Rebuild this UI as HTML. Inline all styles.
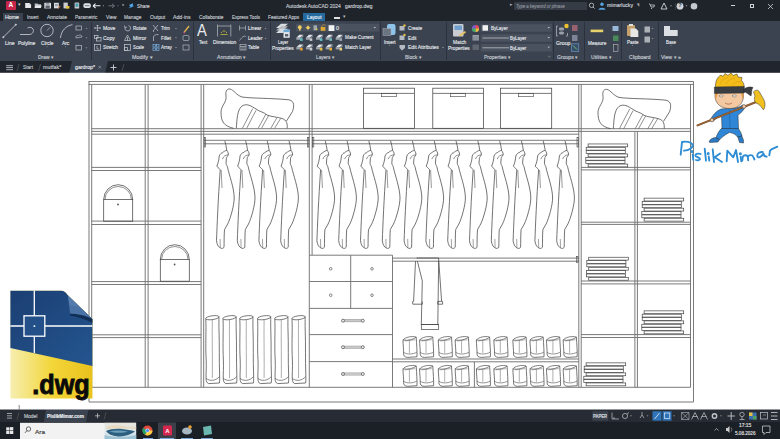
<!DOCTYPE html>
<html><head><meta charset="utf-8"><style>
html,body{margin:0;padding:0;}
body{width:780px;height:439px;overflow:hidden;position:relative;background:#fff;font-family:"Liberation Sans",sans-serif;}
.t{position:absolute;white-space:nowrap;line-height:1;}
.b{position:absolute;box-sizing:border-box;}
</style></head><body>
<div class="b" style="left:0px;top:0px;width:780px;height:20.8px;background:#1f242b;"></div>
<div class="b" style="left:0px;top:20.8px;width:780px;height:40px;background:#3b4350;"></div>
<div class="b" style="left:0px;top:60.8px;width:780px;height:12px;background:#21262e;"></div>
<div class="b" style="left:0px;top:408.8px;width:780px;height:13.5px;background:#272c34;"></div>
<div class="b" style="left:0px;top:422.3px;width:780px;height:16.7px;background:#1b1f26;"></div>
<div class="b" style="left:5.8px;top:1.3px;width:10.4px;height:8.4px;background:#c8254a;border-radius:1px"></div>
<div class="t" style="left:8.6px;top:1.7px;font-size:6.5px;color:#fff;font-weight:bold;">A</div>
<div class="t" style="left:17.5px;top:3px;font-size:4.5px;color:#ccc;font-weight:normal;">▾</div>
<svg class="b" style="left:0;top:0" width="135" height="12"><path d="M25.2,3 L29.5,3 L31.1,4.6 L31.1,8.1 L25.2,8.1 Z" fill="#e6e8eb"/><path d="M29.5,3 L29.5,4.6 L31.1,4.6 Z" fill="#9aa0a8"/><path d="M34.7,3.5 L37.5,3.5 L38.3,4.3 L41,4.3 L41,8.1 L34.7,8.1 Z" fill="#b9bec5"/><path d="M35.5,5.5 L41.8,5.5 L40.8,8.1 L34.7,8.1 Z" fill="#e6e8eb"/><rect x="44.3" y="2.8" width="6.7" height="5.6" rx="0.5" fill="#d8dbe0"/><rect x="45.5" y="5.5" width="4.3" height="2.9" fill="#5a606a"/><rect x="45.8" y="3" width="3.5" height="1.6" fill="#8d939b"/><rect x="54" y="2.8" width="4.8" height="5.5" fill="#d8dbe0"/><rect x="55" y="4" width="2.8" height="0.6" fill="#6a707a"/><rect x="55" y="5.5" width="2.8" height="0.6" fill="#6a707a"/><path d="M57.5,8.4 L60,5.8 L60.5,6.5 L58.2,8.8 Z" fill="#e8843a"/><rect x="63.5" y="2.6" width="4.3" height="5.8" fill="#c9ccd1"/><rect x="66" y="6" width="3.4" height="2.6" fill="#e8c040"/><rect x="74.6" y="2.4" width="4.6" height="6.2" rx="0.6" fill="#c9ccd1"/><rect x="75.4" y="3.4" width="3" height="3.4" fill="#4aa0a8"/><rect x="83.4" y="3.2" width="7.4" height="4.8" rx="1.8" fill="#e0e3e7"/><rect x="84.8" y="5.2" width="4.6" height="1" fill="#6a707a"/><path d="M93,5.8 L100.4,5.8 M93,5.8 L95.6,3.6 M93,5.8 L95.6,8" stroke="#eceef0" stroke-width="1.1" fill="none"/><circle cx="103.5" cy="5.8" r="0.5" fill="#bbb"/><path d="M108.5,5.8 L114.4,5.8 M114.4,5.8 L112,3.8 M114.4,5.8 L112,7.8" stroke="#6d737b" stroke-width="1" fill="none"/><circle cx="118" cy="5.8" r="0.5" fill="#999"/><path d="M121.8,4.6 L124.4,4.6 L123.1,6 Z" fill="#ccc"/><path d="M128.5,8.3 L132.8,3.5 L133.6,6.6 Z" fill="#3b8fd8"/><path d="M129,5 L133,3.3 L131.5,7.5" fill="#5aa8e8"/></svg>
<div class="t" style="left:136.70px;top:3.54px;font-size:5.4px;color:#cfd3d8;font-weight:normal;transform:scaleX(0.874);transform-origin:0 0;-webkit-text-stroke:0.15px #cfd3d8">Share</div>
<div class="t" style="left:286.30px;top:3.66px;font-size:5.6px;color:#c9cdd3;font-weight:normal;transform:scaleX(0.886);transform-origin:0 0;-webkit-text-stroke:0.15px #c9cdd3">Autodesk AutoCAD 2024&nbsp;&nbsp; gardrop.dwg</div>
<div class="t" style="left:510px;top:3px;font-size:4.5px;color:#aaa;font-weight:normal;">▸</div>
<div class="b" style="left:514.4px;top:2.2px;width:72.6px;height:7.7px;background:#363c46;"></div>
<div class="t" style="left:515.80px;top:3.82px;font-size:5.2px;color:#8d939b;font-weight:normal;font-style:italic;transform:scaleX(0.817);transform-origin:0 0;-webkit-text-stroke:0.15px #8d939b">Type a keyword or phrase</div>
<svg class="b" style="left:588px;top:1px" width="110" height="10"><circle cx="3.5" cy="4.3" r="2.2" stroke="#c5c9cf" stroke-width="0.8" fill="none"/><line x1="5" y1="6" x2="6.5" y2="7.5" stroke="#c5c9cf" stroke-width="0.9"/><circle cx="14" cy="3.3" r="1.7" fill="#5aa2e0"/><path d="M10.5,8.8 C10.5,6 17.5,6 17.5,8.8 Z" fill="#5aa2e0"/><path d="M50,4.5 L52,4.5 L51,5.5 Z" fill="#bbb"/><path d="M61,3 L62,3 L63,6 L66,6 L66.5,4 L62.5,4" stroke="#c5c9cf" stroke-width="0.8" fill="none"/><circle cx="63.5" cy="7.3" r="0.6" fill="#c5c9cf"/><path d="M73,8 L76,2 L79,8 Z" stroke="#d0d4da" stroke-width="0.9" fill="none"/><path d="M82,4.5 L84,4.5 L83,5.5 Z" fill="#bbb"/><line x1="87.5" y1="2" x2="87.5" y2="9" stroke="#4a4f57" stroke-width="0.5"/><circle cx="92" cy="5.2" r="3.4" fill="#d0d4da"/><path d="M97.5,4.5 L99.5,4.5 L98.5,5.5 Z" fill="#bbb"/><circle cx="106" cy="5.2" r="3.3" fill="#c5c9cf"/></svg>
<div class="t" style="left:590.8px;top:3.5px;font-size:1px;color:#d4d8de;font-weight:normal;"></div>
<div class="t" style="left:606.80px;top:3.44px;font-size:5.4px;color:#d0d4da;font-weight:normal;transform:scaleX(0.952);transform-origin:0 0;-webkit-text-stroke:0.15px #d0d4da">mimarlucky</div>
<div class="t" style="left:636.5px;top:3px;font-size:4.5px;color:#bbb;font-weight:normal;">▾</div>
<div class="t" style="left:678.3px;top:2.5px;font-size:5.5px;color:#2a2f36;font-weight:bold;">?</div>
<div class="b" style="left:730.6px;top:5.2px;width:4.5px;height:0.7px;background:#cfd3d8;"></div>
<div class="b" style="left:750px;top:3.5px;width:4px;height:4px;background:none;border:0.7px solid #cfd3d8"></div>
<svg class="b" style="left:767px;top:3px" width="7" height="7"><path d="M1,1 L6,6 M6,1 L1,6" stroke="#cfd3d8" stroke-width="0.8"/></svg>
<div class="b" style="left:2.5px;top:12.5px;width:20px;height:8.3px;background:#3b4350;"></div>
<div class="t" style="left:4.70px;top:14.92px;font-size:5.2px;color:#e6e9ed;font-weight:normal;transform:scaleX(1.009);transform-origin:0 0;-webkit-text-stroke:0.15px #e6e9ed">Home</div>
<div class="t" style="left:26.70px;top:14.92px;font-size:5.2px;color:#c3c8ce;font-weight:normal;transform:scaleX(0.892);transform-origin:0 0;-webkit-text-stroke:0.15px #c3c8ce">Insert</div>
<div class="t" style="left:46.70px;top:14.92px;font-size:5.2px;color:#c3c8ce;font-weight:normal;transform:scaleX(0.961);transform-origin:0 0;-webkit-text-stroke:0.15px #c3c8ce">Annotate</div>
<div class="t" style="left:75.00px;top:14.92px;font-size:5.2px;color:#c3c8ce;font-weight:normal;transform:scaleX(0.895);transform-origin:0 0;-webkit-text-stroke:0.15px #c3c8ce">Parametric</div>
<div class="t" style="left:105.80px;top:14.92px;font-size:5.2px;color:#c3c8ce;font-weight:normal;transform:scaleX(0.931);transform-origin:0 0;-webkit-text-stroke:0.15px #c3c8ce">View</div>
<div class="t" style="left:124.20px;top:14.92px;font-size:5.2px;color:#c3c8ce;font-weight:normal;transform:scaleX(0.931);transform-origin:0 0;-webkit-text-stroke:0.15px #c3c8ce">Manage</div>
<div class="t" style="left:149.70px;top:14.92px;font-size:5.2px;color:#c3c8ce;font-weight:normal;transform:scaleX(0.980);transform-origin:0 0;-webkit-text-stroke:0.15px #c3c8ce">Output</div>
<div class="t" style="left:173.30px;top:14.92px;font-size:5.2px;color:#c3c8ce;font-weight:normal;transform:scaleX(0.993);transform-origin:0 0;-webkit-text-stroke:0.15px #c3c8ce">Add-ins</div>
<div class="t" style="left:198.70px;top:14.92px;font-size:5.2px;color:#c3c8ce;font-weight:normal;transform:scaleX(0.925);transform-origin:0 0;-webkit-text-stroke:0.15px #c3c8ce">Collaborate</div>
<div class="t" style="left:231.70px;top:14.92px;font-size:5.2px;color:#c3c8ce;font-weight:normal;transform:scaleX(0.868);transform-origin:0 0;-webkit-text-stroke:0.15px #c3c8ce">Express Tools</div>
<div class="t" style="left:267.50px;top:14.92px;font-size:5.2px;color:#c3c8ce;font-weight:normal;transform:scaleX(0.923);transform-origin:0 0;-webkit-text-stroke:0.15px #c3c8ce">Featured Apps</div>
<div class="b" style="left:303.3px;top:13px;width:22.2px;height:7.8px;background:#246a9e;"></div>
<div class="t" style="left:306.70px;top:14.92px;font-size:5.2px;color:#e8eef5;font-weight:normal;transform:scaleX(0.935);transform-origin:0 0;-webkit-text-stroke:0.15px #e8eef5">Layout</div>
<div class="b" style="left:334px;top:16.8px;width:6px;height:1.8px;background:#e0e0e0;"></div>
<div class="t" style="left:342.5px;top:14.6px;font-size:4.5px;color:#bbb;font-weight:normal;">▾</div>
<div class="b" style="left:90.8px;top:21.5px;width:0.7px;height:38.5px;background:#2c323b;"></div>
<div class="b" style="left:192.5px;top:21.5px;width:0.7px;height:38.5px;background:#2c323b;"></div>
<div class="b" style="left:270px;top:21.5px;width:0.7px;height:38.5px;background:#2c323b;"></div>
<div class="b" style="left:380.4px;top:21.5px;width:0.7px;height:38.5px;background:#2c323b;"></div>
<div class="b" style="left:446.3px;top:21.5px;width:0.7px;height:38.5px;background:#2c323b;"></div>
<div class="b" style="left:553px;top:21.5px;width:0.7px;height:38.5px;background:#2c323b;"></div>
<div class="b" style="left:583.5px;top:21.5px;width:0.7px;height:38.5px;background:#2c323b;"></div>
<div class="b" style="left:621px;top:21.5px;width:0.7px;height:38.5px;background:#2c323b;"></div>
<div class="b" style="left:658.2px;top:21.5px;width:0.7px;height:38.5px;background:#2c323b;"></div>
<div class="t" style="left:37.50px;top:55.08px;font-size:5.3px;color:#c8cdd3;font-weight:normal;transform:scaleX(0.937);transform-origin:0 0;-webkit-text-stroke:0.15px #c8cdd3">Draw ▾</div>
<div class="t" style="left:131.70px;top:55.08px;font-size:5.3px;color:#c8cdd3;font-weight:normal;transform:scaleX(1.026);transform-origin:0 0;-webkit-text-stroke:0.15px #c8cdd3">Modify ▾</div>
<div class="t" style="left:216.70px;top:55.08px;font-size:5.3px;color:#c8cdd3;font-weight:normal;transform:scaleX(0.974);transform-origin:0 0;-webkit-text-stroke:0.15px #c8cdd3">Annotation ▾</div>
<div class="t" style="left:315.80px;top:55.08px;font-size:5.3px;color:#c8cdd3;font-weight:normal;transform:scaleX(0.899);transform-origin:0 0;-webkit-text-stroke:0.15px #c8cdd3">Layers ▾</div>
<div class="t" style="left:405.00px;top:55.08px;font-size:5.3px;color:#c8cdd3;font-weight:normal;transform:scaleX(0.951);transform-origin:0 0;-webkit-text-stroke:0.15px #c8cdd3">Block ▾</div>
<div class="t" style="left:484.20px;top:55.08px;font-size:5.3px;color:#c8cdd3;font-weight:normal;transform:scaleX(0.929);transform-origin:0 0;-webkit-text-stroke:0.15px #c8cdd3">Properties ▾</div>
<div class="t" style="left:557.00px;top:55.08px;font-size:5.3px;color:#c8cdd3;font-weight:normal;transform:scaleX(0.964);transform-origin:0 0;-webkit-text-stroke:0.15px #c8cdd3">Groups ▾</div>
<div class="t" style="left:590.60px;top:55.08px;font-size:5.3px;color:#c8cdd3;font-weight:normal;transform:scaleX(0.959);transform-origin:0 0;-webkit-text-stroke:0.15px #c8cdd3">Utilities ▾</div>
<div class="t" style="left:628.70px;top:55.08px;font-size:5.3px;color:#c8cdd3;font-weight:normal;transform:scaleX(0.952);transform-origin:0 0;-webkit-text-stroke:0.15px #c8cdd3">Clipboard</div>
<div class="t" style="left:660.60px;top:55.08px;font-size:5.3px;color:#c8cdd3;font-weight:normal;transform:scaleX(0.974);transform-origin:0 0;-webkit-text-stroke:0.15px #c8cdd3">View ▾ »</div>
<div class="t" style="left:548px;top:55px;font-size:4px;color:#999;font-weight:normal;">»</div>
<svg class="b" style="left:0;top:20px" width="95" height="40" viewBox="0 20 95 40"><g stroke="#cfd3d8" stroke-width="0.8" fill="none"><line x1="3.3" y1="37.2" x2="15.8" y2="24.7"/><circle cx="3.3" cy="37.2" r="0.6" fill="#cfd3d8"/><circle cx="15.8" cy="24.7" r="0.6" fill="#cfd3d8"/><path d="M20,34.5 L29,34.5 C33,34.5 34,31 33,29 C32,27 29,27 27.5,28"/><circle cx="47" cy="30.5" r="6.2"/><line x1="47" y1="30.5" x2="50.5" y2="27" stroke-width="0.6"/><path d="M60.5,38 C61,31 66,25.5 72.5,24.7"/><rect x="76" y="26" width="5.5" height="4" stroke-width="0.6"/><path d="M76,38 C75.5,36 77,35 78.5,35.5 C79.5,34.5 82,35 82,37 Z" stroke-width="0.6"/><rect x="76" y="45.5" width="5.5" height="4.5" stroke-width="0.6"/></g><g fill="#aaa"><path d="M85.5,28 L87.5,28 L86.5,29 Z"/><path d="M85.5,37.5 L87.5,37.5 L86.5,38.5 Z"/><path d="M85.5,47.5 L87.5,47.5 L86.5,48.5 Z"/><rect x="46.5" y="46.5" width="1" height="0.6"/><rect x="65" y="46.5" width="1" height="0.6"/></g></svg>
<div class="t" style="left:4.70px;top:40.56px;font-size:5.6px;color:#e4e7eb;font-weight:normal;transform:scaleX(0.897);transform-origin:0 0;-webkit-text-stroke:0.15px #e4e7eb">Line</div>
<div class="t" style="left:18.00px;top:40.56px;font-size:5.6px;color:#e4e7eb;font-weight:normal;transform:scaleX(0.882);transform-origin:0 0;-webkit-text-stroke:0.15px #e4e7eb">Polyline</div>
<div class="t" style="left:40.80px;top:40.56px;font-size:5.6px;color:#e4e7eb;font-weight:normal;transform:scaleX(0.873);transform-origin:0 0;-webkit-text-stroke:0.15px #e4e7eb">Circle</div>
<div class="t" style="left:62.00px;top:40.56px;font-size:5.6px;color:#e4e7eb;font-weight:normal;transform:scaleX(0.857);transform-origin:0 0;-webkit-text-stroke:0.15px #e4e7eb">Arc</div>
<div class="t" style="left:103.00px;top:25.68px;font-size:5.8px;color:#e4e7eb;font-weight:normal;transform:scaleX(0.867);transform-origin:0 0;-webkit-text-stroke:0.15px #e4e7eb">Move</div>
<div class="t" style="left:132.50px;top:25.68px;font-size:5.8px;color:#e4e7eb;font-weight:normal;transform:scaleX(0.802);transform-origin:0 0;-webkit-text-stroke:0.15px #e4e7eb">Rotate</div>
<div class="t" style="left:160.80px;top:25.68px;font-size:5.8px;color:#e4e7eb;font-weight:normal;transform:scaleX(0.782);transform-origin:0 0;-webkit-text-stroke:0.15px #e4e7eb">Trim</div>
<div class="t" style="left:103.00px;top:35.68px;font-size:5.8px;color:#e4e7eb;font-weight:normal;transform:scaleX(0.864);transform-origin:0 0;-webkit-text-stroke:0.15px #e4e7eb">Copy</div>
<div class="t" style="left:132.50px;top:35.68px;font-size:5.8px;color:#e4e7eb;font-weight:normal;transform:scaleX(0.879);transform-origin:0 0;-webkit-text-stroke:0.15px #e4e7eb">Mirror</div>
<div class="t" style="left:160.80px;top:35.68px;font-size:5.8px;color:#e4e7eb;font-weight:normal;transform:scaleX(0.817);transform-origin:0 0;-webkit-text-stroke:0.15px #e4e7eb">Fillet</div>
<div class="t" style="left:103.00px;top:45.18px;font-size:5.8px;color:#e4e7eb;font-weight:normal;transform:scaleX(0.816);transform-origin:0 0;-webkit-text-stroke:0.15px #e4e7eb">Stretch</div>
<div class="t" style="left:132.50px;top:45.18px;font-size:5.8px;color:#e4e7eb;font-weight:normal;transform:scaleX(0.744);transform-origin:0 0;-webkit-text-stroke:0.15px #e4e7eb">Scale</div>
<div class="t" style="left:160.80px;top:45.18px;font-size:5.8px;color:#e4e7eb;font-weight:normal;transform:scaleX(0.787);transform-origin:0 0;-webkit-text-stroke:0.15px #e4e7eb">Array</div>
<svg class="b" style="left:90px;top:20px" width="80" height="40" viewBox="90 20 80 40"><g stroke="#c5c9cf" stroke-width="0.7" fill="none"><path d="M97.5,25 L97.5,31 M94.5,28 L100.5,28 M96.5,26 L97.5,25 L98.5,26 M96.5,30 L97.5,31 L98.5,30 M95.5,27 L94.5,28 L95.5,29 M99.5,27 L100.5,28 L99.5,29"/><rect x="94.5" y="35.5" width="3.5" height="3" /><rect x="96.5" y="37.5" width="4.5" height="3.5"/><rect x="94.5" y="44.5" width="6" height="6"/><path d="M97,46 L97,49 L99,49"/><path d="M128.5,25.5 A2.8,2.8 0 1 1 125,27.5"/><path d="M124.5,25.5 L125,27.8 L127,27"/><path d="M124.5,40.5 L127.5,35 L130.5,40.5 Z"/><line x1="127.5" y1="37" x2="127.5" y2="40.5"/><rect x="124.5" y="44.5" width="6" height="6"/><rect x="124.5" y="47.5" width="3" height="3"/><path d="M153,25 L158,31 M158,25 L153,31 M153,31 L154,32"/><path d="M153.5,41 L153.5,37 C153.5,35.5 155,34.5 158.5,34.5"/></g><g stroke="#7ab0e0" stroke-width="0.7" fill="none"><rect x="153" y="44.5" width="2.5" height="2.5"/><rect x="156.5" y="44.5" width="2.5" height="2.5"/><rect x="153" y="48" width="2.5" height="2.5"/><rect x="156.5" y="48" width="2.5" height="2.5"/></g></svg>
<svg class="b" style="left:170px;top:20px" width="22" height="40" viewBox="170 20 22 40"><g fill="#aaa"><path d="M175,28 L177,28 L176,29 Z"/><path d="M175,37.5 L177,37.5 L176,38.5 Z"/><path d="M175,47 L177,47 L176,48 Z"/></g><path d="M183.5,32 L188.5,25.5 L189.5,26.5 L184.5,33 Z" fill="#e0b44a"/><path d="M183,33 L184.5,31.5 L185,33.5 Z" fill="#d04a8a"/><rect x="183" y="35.5" width="6" height="5" rx="1" stroke="#c5c9cf" stroke-width="0.6" fill="none"/><rect x="183" y="45" width="6" height="5" stroke="#c5c9cf" stroke-width="0.6" fill="none"/></svg>
<div class="t" style="left:197.2px;top:22.6px;font-size:16px;color:#e8eaee;font-weight:normal;transform:scaleX(0.92);transform-origin:0 0">A</div>
<div class="t" style="left:199.20px;top:40.06px;font-size:5.6px;color:#e4e7eb;font-weight:normal;transform:scaleX(0.808);transform-origin:0 0;-webkit-text-stroke:0.15px #e4e7eb">Text</div>
<svg class="b" style="left:210px;top:20px" width="60" height="40" viewBox="210 20 60 40"><g stroke="#b8bdc4" stroke-width="0.7" fill="none"><line x1="217.5" y1="24.5" x2="217.5" y2="36.5"/><line x1="230.8" y1="24.5" x2="230.8" y2="36.5"/><line x1="217.5" y1="26" x2="230.8" y2="26"/></g><g stroke="#d8c83a" stroke-width="0.7"><path d="M221,33 L222.5,31.5 M224,32 L224,30 M227,33 L225.5,31.5 M220.5,34.5 L227.5,34.5"/></g><rect x="202" y="44" width="1" height="0.6" fill="#aaa"/><g stroke="#c5c9cf" stroke-width="0.6" fill="none"><path d="M239.5,25.5 L239.5,30.5 M245.5,25.5 L245.5,30.5 M239.5,28 L245.5,28"/><path d="M239.5,40.5 L242,37.5 C243,36 245,36 246,36.5" /><rect x="240" y="44.5" width="6" height="5.5"/><path d="M240,46.5 L246,46.5 M242,46.5 L242,50 M244,46.5 L244,50"/></g><g fill="#aaa"><path d="M264.5,28 L266.5,28 L265.5,29 Z"/><path d="M264.5,38 L266.5,38 L265.5,39 Z"/></g></svg>
<div class="t" style="left:212.50px;top:40.06px;font-size:5.6px;color:#e4e7eb;font-weight:normal;transform:scaleX(0.881);transform-origin:0 0;-webkit-text-stroke:0.15px #e4e7eb">Dimension</div>
<div class="t" style="left:247.50px;top:25.68px;font-size:5.8px;color:#e4e7eb;font-weight:normal;transform:scaleX(0.825);transform-origin:0 0;-webkit-text-stroke:0.15px #e4e7eb">Linear</div>
<div class="t" style="left:247.50px;top:35.68px;font-size:5.8px;color:#e4e7eb;font-weight:normal;transform:scaleX(0.803);transform-origin:0 0;-webkit-text-stroke:0.15px #e4e7eb">Leader</div>
<div class="t" style="left:247.50px;top:45.18px;font-size:5.8px;color:#e4e7eb;font-weight:normal;transform:scaleX(0.808);transform-origin:0 0;-webkit-text-stroke:0.15px #e4e7eb">Table</div>
<svg class="b" style="left:270px;top:20px" width="112" height="40" viewBox="270 20 112 40"><g fill="#d9dce0"><path d="M276,28 L281,23.8 L288,23.8 L283,28 Z"/><path d="M276,30.5 L281,26.3 L288,26.3 L283,30.5 Z" fill="#b8bcc2"/><path d="M276,33 L281,28.8 L288,28.8 L283,33 Z"/></g><rect x="283.5" y="29.6" width="6.2" height="8.2" fill="#e6e9ec"/><rect x="283.5" y="29.6" width="6.2" height="2.5" fill="#6aa8d8"/><rect x="285" y="34" width="3.2" height="2.5" fill="#5a6370"/><rect x="296" y="23.8" width="83.2" height="7.7" fill="#4a5260"/><g fill="#f0d060"><circle cx="299.8" cy="27.2" r="1.9"/><rect x="299" y="28.8" width="1.6" height="1.8"/><circle cx="308" cy="27.7" r="1.6"/></g><g stroke="#f0d060" stroke-width="0.5"><path d="M305.5,27.7 L310.5,27.7 M308,25.2 L308,30.2"/></g><rect x="313.5" y="25.3" width="3.5" height="5" fill="#a0a8b0"/><rect x="316" y="28.5" width="1.5" height="1.5" fill="#e0d040"/><rect x="320.7" y="27" width="4.6" height="3.8" fill="#e0a830"/><path d="M321.5,27 C321.5,24.5 325,24.5 325.5,25.5" stroke="#e0a830" stroke-width="0.6" fill="none"/><rect x="328.6" y="25.2" width="5.8" height="5.8" fill="#f2f2f2"/><path d="M373.5,27 L376,27 L374.8,28.3 Z" fill="#ccc"/><path d="M296.3,37.8 L299.3,34.8 L303.3,34.8 L300.3,37.8 Z" fill="#dfe2e6"/><path d="M296.3,37.8 L300.3,37.8 L300.3,39.8 L296.3,39.8 Z" fill="#9ea4ac"/><path d="M300.3,37.8 L303.3,34.8 L303.3,36.8 L300.3,39.8 Z" fill="#7d838c"/><rect x="300.1" y="38.3" width="2.6" height="2.6" fill="#5fc0c8"/><path d="M305.9,37.8 L308.9,34.8 L312.9,34.8 L309.9,37.8 Z" fill="#dfe2e6"/><path d="M305.9,37.8 L309.9,37.8 L309.9,39.8 L305.9,39.8 Z" fill="#9ea4ac"/><path d="M309.9,37.8 L312.9,34.8 L312.9,36.8 L309.9,39.8 Z" fill="#7d838c"/><rect x="309.7" y="38.3" width="2.6" height="2.6" fill="#c9ccd1"/><path d="M316.0,37.8 L319.0,34.8 L323.0,34.8 L320.0,37.8 Z" fill="#dfe2e6"/><path d="M316.0,37.8 L320.0,37.8 L320.0,39.8 L316.0,39.8 Z" fill="#9ea4ac"/><path d="M320.0,37.8 L323.0,34.8 L323.0,36.8 L320.0,39.8 Z" fill="#7d838c"/><rect x="319.8" y="38.3" width="2.6" height="2.6" fill="#5fc0c8"/><path d="M325.6,37.8 L328.6,34.8 L332.6,34.8 L329.6,37.8 Z" fill="#dfe2e6"/><path d="M325.6,37.8 L329.6,37.8 L329.6,39.8 L325.6,39.8 Z" fill="#9ea4ac"/><path d="M329.6,37.8 L332.6,34.8 L332.6,36.8 L329.6,39.8 Z" fill="#7d838c"/><rect x="329.40000000000003" y="38.3" width="2.6" height="2.6" fill="#6fb8c0"/><path d="M335.7,37.8 L338.7,34.8 L342.7,34.8 L339.7,37.8 Z" fill="#dfe2e6"/><path d="M335.7,37.8 L339.7,37.8 L339.7,39.8 L335.7,39.8 Z" fill="#9ea4ac"/><path d="M339.7,37.8 L342.7,34.8 L342.7,36.8 L339.7,39.8 Z" fill="#7d838c"/><rect x="339.5" y="38.3" width="2.6" height="2.6" fill="#a0a6ae"/><path d="M296.3,47.4 L299.3,44.4 L303.3,44.4 L300.3,47.4 Z" fill="#dfe2e6"/><path d="M296.3,47.4 L300.3,47.4 L300.3,49.4 L296.3,49.4 Z" fill="#9ea4ac"/><path d="M300.3,47.4 L303.3,44.4 L303.3,46.4 L300.3,49.4 Z" fill="#7d838c"/><rect x="300.1" y="47.9" width="2.6" height="2.6" fill="#e8a030"/><path d="M305.9,47.4 L308.9,44.4 L312.9,44.4 L309.9,47.4 Z" fill="#dfe2e6"/><path d="M305.9,47.4 L309.9,47.4 L309.9,49.4 L305.9,49.4 Z" fill="#9ea4ac"/><path d="M309.9,47.4 L312.9,44.4 L312.9,46.4 L309.9,49.4 Z" fill="#7d838c"/><rect x="309.7" y="47.9" width="2.6" height="2.6" fill="#c9ccd1"/><path d="M316.0,47.4 L319.0,44.4 L323.0,44.4 L320.0,47.4 Z" fill="#dfe2e6"/><path d="M316.0,47.4 L320.0,47.4 L320.0,49.4 L316.0,49.4 Z" fill="#9ea4ac"/><path d="M320.0,47.4 L323.0,44.4 L323.0,46.4 L320.0,49.4 Z" fill="#7d838c"/><rect x="319.8" y="47.9" width="2.6" height="2.6" fill="#e8c040"/><path d="M325.6,47.4 L328.6,44.4 L332.6,44.4 L329.6,47.4 Z" fill="#dfe2e6"/><path d="M325.6,47.4 L329.6,47.4 L329.6,49.4 L325.6,49.4 Z" fill="#9ea4ac"/><path d="M329.6,47.4 L332.6,44.4 L332.6,46.4 L329.6,49.4 Z" fill="#7d838c"/><rect x="329.40000000000003" y="47.9" width="2.6" height="2.6" fill="#e8b030"/><path d="M335.7,47.4 L338.7,44.4 L342.7,44.4 L339.7,47.4 Z" fill="#dfe2e6"/><path d="M335.7,47.4 L339.7,47.4 L339.7,49.4 L335.7,49.4 Z" fill="#9ea4ac"/><path d="M339.7,47.4 L342.7,44.4 L342.7,46.4 L339.7,49.4 Z" fill="#7d838c"/><rect x="339.5" y="47.9" width="2.6" height="2.6" fill="#e8d080"/></svg>
<div class="t" style="left:278.30px;top:40.06px;font-size:5.6px;color:#e4e7eb;font-weight:normal;transform:scaleX(0.714);transform-origin:0 0;-webkit-text-stroke:0.15px #e4e7eb">Layer</div>
<div class="t" style="left:271.70px;top:45.76px;font-size:5.6px;color:#e4e7eb;font-weight:normal;transform:scaleX(0.846);transform-origin:0 0;-webkit-text-stroke:0.15px #e4e7eb">Properties</div>
<div class="t" style="left:336.20px;top:25.76px;font-size:5.6px;color:#e4e7eb;font-weight:normal;transform:scaleX(0.963);transform-origin:0 0;-webkit-text-stroke:0.15px #e4e7eb">0</div>
<div class="t" style="left:344.70px;top:35.18px;font-size:5.8px;color:#e4e7eb;font-weight:normal;transform:scaleX(0.814);transform-origin:0 0;-webkit-text-stroke:0.15px #e4e7eb">Make Current</div>
<div class="t" style="left:344.70px;top:45.18px;font-size:5.8px;color:#e4e7eb;font-weight:normal;transform:scaleX(0.818);transform-origin:0 0;-webkit-text-stroke:0.15px #e4e7eb">Match Layer</div>
<svg class="b" style="left:380px;top:20px" width="68" height="40" viewBox="380 20 68 40"><rect x="387" y="24" width="8.5" height="11" rx="2" fill="#8ec3ea"/><rect x="383" y="28.5" width="8" height="7" fill="#6b7481" stroke="#aab" stroke-width="0.5"/><rect x="389" y="45" width="1" height="0.6" fill="#aaa"/><g fill="#b4bac2"><rect x="399.5" y="26" width="5" height="4.5"/><rect x="399.5" y="35.5" width="5" height="4.5"/><path d="M399.5,45 L405,45 L405,48 L402,50.5 L399.5,48 Z"/></g><g fill="#e0c040"><circle cx="404.5" cy="25.5" r="1.2"/><circle cx="404.5" cy="35" r="1.2"/></g><path d="M442,47 L444,47 L443,48 Z" fill="#aaa"/></svg>
<div class="t" style="left:384.20px;top:39.66px;font-size:5.6px;color:#e4e7eb;font-weight:normal;transform:scaleX(0.828);transform-origin:0 0;-webkit-text-stroke:0.15px #e4e7eb">Insert</div>
<div class="t" style="left:407.50px;top:25.68px;font-size:5.8px;color:#e4e7eb;font-weight:normal;transform:scaleX(0.816);transform-origin:0 0;-webkit-text-stroke:0.15px #e4e7eb">Create</div>
<div class="t" style="left:407.50px;top:35.68px;font-size:5.8px;color:#e4e7eb;font-weight:normal;transform:scaleX(0.830);transform-origin:0 0;-webkit-text-stroke:0.15px #e4e7eb">Edit</div>
<div class="t" style="left:407.50px;top:45.18px;font-size:5.8px;color:#e4e7eb;font-weight:normal;transform:scaleX(0.861);transform-origin:0 0;-webkit-text-stroke:0.15px #e4e7eb">Edit Attributes</div>
<svg class="b" style="left:446px;top:20px" width="108" height="40" viewBox="446 20 108 40"><rect x="453" y="24" width="10.5" height="12.5" rx="1" fill="#c9ccd1"/><rect x="454.5" y="25.5" width="7.5" height="4.5" fill="#6fa0d0"/><path d="M459,35 L465,31 L466,32.5 L460,36.5 Z" fill="#e8c060"/><circle cx="475.5" cy="28.5" r="3.6" fill="#7a5ad0"/><path d="M475.5,28.5 L475.5,24.9 A3.6,3.6 0 0 1 479.1,28.5 Z" fill="#e84a4a"/><path d="M475.5,28.5 L479.1,28.5 A3.6,3.6 0 0 1 475.5,32.1 Z" fill="#f0c030"/><path d="M475.5,28.5 L475.5,32.1 A3.6,3.6 0 0 1 471.9,28.5 Z" fill="#40b060"/><rect x="472.5" y="35" width="6.5" height="5.5" fill="#9aa0a8"/><g stroke="#5a606a" stroke-width="0.5"><line x1="472.5" y1="37" x2="479" y2="37"/><line x1="472.5" y1="39" x2="479" y2="39"/></g><rect x="472.5" y="44.5" width="6.5" height="5.5" fill="#5f6670"/><rect x="480.8" y="24.2" width="71" height="7.5" fill="#4a5260"/><rect x="480.8" y="34.3" width="71" height="7.5" fill="#4a5260"/><rect x="480.8" y="44" width="71" height="7.5" fill="#4a5260"/><g fill="#ccc"><path d="M547.5,27 L550,27 L548.8,28.3 Z"/><path d="M547.5,37 L550,37 L548.8,38.3 Z"/><path d="M547.5,46.8 L550,46.8 L548.8,48.1 Z"/></g><rect x="482.5" y="25.2" width="5.5" height="5.5" fill="#f2f2f2"/><line x1="482.5" y1="38" x2="509" y2="38" stroke="#d0d0d0" stroke-width="0.7"/><line x1="482.5" y1="47.8" x2="509" y2="47.8" stroke="#d0d0d0" stroke-width="0.7"/></svg>
<div class="t" style="left:453.00px;top:40.06px;font-size:5.6px;color:#e4e7eb;font-weight:normal;transform:scaleX(0.872);transform-origin:0 0;-webkit-text-stroke:0.15px #e4e7eb">Match</div>
<div class="t" style="left:448.30px;top:45.76px;font-size:5.6px;color:#e4e7eb;font-weight:normal;transform:scaleX(0.850);transform-origin:0 0;-webkit-text-stroke:0.15px #e4e7eb">Properties</div>
<div class="t" style="left:490.80px;top:25.76px;font-size:5.6px;color:#e4e7eb;font-weight:normal;transform:scaleX(0.813);transform-origin:0 0;-webkit-text-stroke:0.15px #e4e7eb">ByLayer</div>
<div class="t" style="left:509.90px;top:35.76px;font-size:5.6px;color:#e4e7eb;font-weight:normal;transform:scaleX(0.784);transform-origin:0 0;-webkit-text-stroke:0.15px #e4e7eb">ByLayer</div>
<div class="t" style="left:509.90px;top:45.56px;font-size:5.6px;color:#e4e7eb;font-weight:normal;transform:scaleX(0.784);transform-origin:0 0;-webkit-text-stroke:0.15px #e4e7eb">ByLayer</div>
<svg class="b" style="left:553px;top:20px" width="130" height="40" viewBox="553 20 130 40"><g stroke="#b8bdc4" stroke-width="0.7" fill="none"><path d="M558,26 L556.5,26 L556.5,36 L558,36 M566,26 L567.5,26 M566,36 L567.5,36 L567.5,33"/></g><rect x="559" y="27.5" width="5" height="3" rx="1" fill="#9aa0a8"/><rect x="559" y="31.5" width="5" height="3" rx="1.5" fill="#9aa0a8"/><circle cx="566.5" cy="26" r="2.2" fill="#f0c030"/><rect x="572" y="25" width="5.5" height="6" fill="#b06a78" opacity="0.8"/><rect x="572" y="35" width="5.5" height="6" fill="#8a90a6" opacity="0.85"/><rect x="571.3" y="43.8" width="7.5" height="7.5" fill="#3a5068" stroke="#6fa0d0" stroke-width="0.6"/><path d="M573,45.5 L577,49.5" stroke="#7fd07f" stroke-width="0.8"/><rect x="590.6" y="29.6" width="12.6" height="2.6" fill="#e8d36a"/><rect x="596.5" y="45" width="1" height="0.6" fill="#aaa"/><rect x="612.5" y="26" width="6" height="5" fill="#9ab8d8"/><rect x="613" y="35.5" width="5.5" height="5.5" fill="#4a8a5a"/><rect x="613.5" y="44.5" width="4.5" height="7" fill="none" stroke="#bbb" stroke-width="0.6"/><rect x="627" y="25" width="8" height="11" rx="1" fill="#c6a06a"/><rect x="629" y="24" width="4" height="2" fill="#e0e0e0"/><path d="M630.5,28.5 L636,28.5 L638.3,31 L638.3,37 L630.5,37 Z" fill="#e6e6e6"/><rect x="632" y="45" width="1" height="0.6" fill="#aaa"/><rect x="644.5" y="26.5" width="5.5" height="6" fill="#c9ccd1" opacity="0.8"/><rect x="644.5" y="36.5" width="5.5" height="6" fill="#c9ccd1" opacity="0.8"/><g fill="#aaa"><path d="M651.5,28 L653.5,28 L652.5,29 Z"/><path d="M651.5,38 L653.5,38 L652.5,39 Z"/></g><path d="M664,26 L670,26 L670,30 L677.7,30 L677.7,36 L664,36 Z" fill="#dcdfe3"/><rect x="670.5" y="45.5" width="1" height="0.6" fill="#aaa"/></svg>
<div class="t" style="left:555.60px;top:40.56px;font-size:5.6px;color:#e4e7eb;font-weight:normal;transform:scaleX(0.925);transform-origin:0 0;-webkit-text-stroke:0.15px #e4e7eb">Group</div>
<div class="t" style="left:587.60px;top:40.56px;font-size:5.6px;color:#e4e7eb;font-weight:normal;transform:scaleX(0.840);transform-origin:0 0;-webkit-text-stroke:0.15px #e4e7eb">Measure</div>
<div class="t" style="left:626.80px;top:40.26px;font-size:5.6px;color:#e4e7eb;font-weight:normal;transform:scaleX(0.803);transform-origin:0 0;-webkit-text-stroke:0.15px #e4e7eb">Paste</div>
<div class="t" style="left:666.00px;top:40.36px;font-size:5.6px;color:#e4e7eb;font-weight:normal;transform:scaleX(0.783);transform-origin:0 0;-webkit-text-stroke:0.15px #e4e7eb">Base</div>
<svg class="b" style="left:0;top:60.8px" width="130" height="12"><path d="M69,12 L72,0 L108,0 L105,12 Z" fill="#3b4350"/><g stroke="#6a7079" stroke-width="0.5"><line x1="17" y1="10" x2="19" y2="3"/><line x1="38.5" y1="10" x2="40.5" y2="3"/><line x1="122" y1="10" x2="124" y2="3"/></g><g stroke="#d0d4da" stroke-width="0.8"><line x1="6.2" y1="4.7" x2="13" y2="4.7"/><line x1="6.2" y1="6.6" x2="13" y2="6.6"/><line x1="6.2" y1="8.7" x2="13" y2="8.7"/><line x1="110.5" y1="6.5" x2="116.5" y2="6.5" stroke-width="0.9"/><line x1="113.5" y1="3.5" x2="113.5" y2="9.5" stroke-width="0.9"/></g><path d="M98.5,5 L101,7.5 M101,5 L98.5,7.5" stroke="#aab0b8" stroke-width="0.6"/></svg>
<div class="t" style="left:23.30px;top:65.00px;font-size:5.5px;color:#c3c8ce;font-weight:normal;transform:scaleX(0.861);transform-origin:0 0;-webkit-text-stroke:0.15px #c3c8ce">Start</div>
<div class="t" style="left:42.50px;top:65.00px;font-size:5.5px;color:#c3c8ce;font-weight:normal;transform:scaleX(0.981);transform-origin:0 0;-webkit-text-stroke:0.15px #c3c8ce">mutfak*</div>
<div class="t" style="left:75.00px;top:65.00px;font-size:5.5px;color:#e8ebef;font-weight:normal;transform:scaleX(0.948);transform-origin:0 0;-webkit-text-stroke:0.15px #e8ebef">gardrop*</div>
<svg class="b" style="left:0;top:408.8px" width="120" height="13.5"><path d="M43.6,13.5 L46,0.6 L88.5,0.6 L86,13.5 Z" fill="#3b4350"/><g stroke="#cfd3d8" stroke-width="0.7"><line x1="7" y1="4.5" x2="12" y2="4.5"/><line x1="7" y1="6.8" x2="12" y2="6.8"/><line x1="7" y1="9.1" x2="12" y2="9.1"/><line x1="95" y1="6.8" x2="100" y2="6.8"/><line x1="97.5" y1="4.3" x2="97.5" y2="9.3"/></g><g stroke="#666" stroke-width="0.5"><line x1="17" y1="10.5" x2="19" y2="3.5"/><line x1="104" y1="10.5" x2="106" y2="3.5"/></g></svg>
<div class="t" style="left:23.80px;top:414.00px;font-size:5.0px;color:#c3c8ce;font-weight:normal;transform:scaleX(0.984);transform-origin:0 0;-webkit-text-stroke:0.15px #c3c8ce">Model</div>
<div class="t" style="left:46.90px;top:414.00px;font-size:5.0px;color:#eef0f3;font-weight:bold;transform:scaleX(0.942);transform-origin:0 0;-webkit-text-stroke:0.15px #eef0f3">PislikMimar.com</div>
<svg class="b" style="left:0;top:408.8px" width="780" height="13.5"><rect x="592.3" y="2.2" width="16" height="9.5" fill="#3a414c"/><g stroke="#c0c4ca" stroke-width="0.7" fill="none"><path d="M612,3.5 L612,10 L619,10 M614,8 L614,10"/><circle cx="625" cy="7" r="2.6"/><path d="M627,5 L629,3.5"/><path d="M642,3 L642,6 M640,9 L642,6 L644,9"/><path d="M681.5,3.5 L689,10.5 M681.5,10.5 L689,3.5 M681.5,3.5 L689,3.5 L689,10.5 L681.5,10.5 Z" stroke-width="0.55"/><path d="M691.5,10.5 L695,3.5 L698.5,10.5 M692.5,7.5 L697.5,7.5"/><path d="M700.5,10.5 L704,3.5 L707.5,10.5 M701.5,7.5 L706.5,7.5"/><circle cx="714.5" cy="7" r="2.2" stroke-width="1.4"/><path d="M731.2,3 L731.2,11 M727.5,7 L735,7" stroke-width="0.9"/><circle cx="742" cy="5.5" r="2.2"/><path d="M739.5,10.5 L744.5,10.5 M742,8 L742,10.5"/><rect x="760.5" y="3.5" width="7" height="6.5"/><path d="M763,6 L766,6" stroke-width="0.5"/><path d="M771,3.5 L777.5,3.5 M771,7 L777.5,7 M771,10.5 L777.5,10.5" stroke-width="0.9"/></g><g fill="#aaa"><path d="M630,6.5 L632,6.5 L631,7.5 Z"/><path d="M646.5,6.5 L648.5,6.5 L647.5,7.5 Z"/><path d="M673,6.5 L675,6.5 L674,7.5 Z"/><path d="M720,6.5 L722,6.5 L721,7.5 Z"/></g><rect x="652.5" y="2.2" width="9" height="9.5" fill="#2f73b8"/><rect x="662.5" y="2.2" width="9" height="9.5" fill="#2f73b8"/><path d="M654.5,10 L659.5,4" stroke="#fff" stroke-width="0.7"/><rect x="664.3" y="4" width="5.5" height="5.5" stroke="#fff" stroke-width="0.6" fill="none"/><rect x="749" y="3.5" width="7.5" height="7" fill="#3a70b0"/><rect x="749" y="3.5" width="3.5" height="3.5" fill="#e0c040"/><rect x="753" y="7" width="3.5" height="3.5" fill="#50a060"/></svg>
<div class="t" style="left:593.30px;top:414.86px;font-size:4.6px;color:#cfd3d8;font-weight:bold;transform:scaleX(0.909);transform-origin:0 0;-webkit-text-stroke:0.15px #cfd3d8">PAPER</div>
<svg class="b" style="left:0;top:422.3px" width="220" height="17"><g fill="#e6e6e6"><rect x="6.2" y="5.3" width="3.3" height="3.1"/><rect x="10" y="5.1" width="3.3" height="3.3"/><rect x="6.2" y="8.9" width="3.3" height="3.1"/><rect x="10" y="8.9" width="3.3" height="3.1"/></g><rect x="20" y="0.8" width="116" height="16.2" fill="#f2f2f2"/><circle cx="28.5" cy="7" r="2.2" stroke="#333" stroke-width="0.7" fill="none"/><line x1="27" y1="8.6" x2="25" y2="10.8" stroke="#333" stroke-width="0.8"/><defs><linearGradient id="sky" x1="0" y1="0" x2="0" y2="1"><stop offset="0" stop-color="#e8e4dc"/><stop offset="0.5" stop-color="#dfe8ec"/><stop offset="1" stop-color="#c8dce4"/></linearGradient></defs><rect x="104.6" y="0.8" width="31.6" height="16.2" fill="url(#sky)"/><path d="M106,5 C112,2.5 120,3 126,4.5 C130,5.5 133,4 136.2,5 L136.2,7 C128,6.5 118,6 106,7 Z" fill="#e8d2b0" opacity="0.7"/><path d="M106,9 C110,7 116,6.5 122,7 C127,7.5 131,8 135,9.5 C131,12.5 124,14.5 118,14.5 C112,14 108,12 106,9 Z" fill="#2d5f7e"/><path d="M109,9.5 C114,8 122,8 128,9.5 C124,11 116,11.5 109,9.5 Z" fill="#6aa0bc"/><path d="M104.6,13 C112,15.5 126,15.5 136.2,13 L136.2,17 L104.6,17 Z" fill="#9cc4d6"/><circle cx="147.5" cy="8.5" r="5" fill="#dd4b3e"/><path d="M147.5,8.5 L152.5,8.5 A5,5 0 0 1 145,12.8 Z" fill="#ffcd40"/><path d="M147.5,8.5 L145,12.8 A5,5 0 0 1 143,6 Z" fill="#1da462"/><circle cx="147.5" cy="8.5" r="2.1" fill="#fff"/><circle cx="147.5" cy="8.5" r="1.6" fill="#4a8af4"/><rect x="158" y="0.5" width="18" height="16.5" fill="#3a3f48"/><rect x="163" y="3.5" width="9" height="10" fill="#d6274f" rx="1"/><text x="165.2" y="10.5" font-size="6" font-family="Liberation Sans" font-weight="bold" fill="#fff">A</text><ellipse cx="187" cy="9" rx="5" ry="3.5" fill="#a7b7c2"/><circle cx="190" cy="5" r="1.8" fill="#e8a030"/><path d="M203,5 L211,3.5 L212,12 L204,13.5 Z" fill="#6bb7b0"/><g fill="#7aa8d8"><rect x="143" y="16" width="10" height="1"/><rect x="160" y="16" width="14" height="1"/><rect x="181" y="16" width="12" height="1"/><rect x="201" y="16" width="12" height="1"/></g></svg>
<div class="t" style="left:35.40px;top:428.50px;font-size:6.0px;color:#333;font-weight:normal;transform:scaleX(1.071);transform-origin:0 0;-webkit-text-stroke:0.15px #333">Ara</div>
<div class="t" style="left:739.00px;top:424.48px;font-size:4.8px;color:#e0e0e0;font-weight:normal;transform:scaleX(1.024);transform-origin:0 0;-webkit-text-stroke:0.15px #e0e0e0">17:15</div>
<div class="t" style="left:735.10px;top:431.68px;font-size:4.8px;color:#e0e0e0;font-weight:normal;transform:scaleX(0.960);transform-origin:0 0;-webkit-text-stroke:0.15px #e0e0e0">5.08.2026</div>
<svg class="b" style="left:709px;top:422.3px" width="71" height="17"><path d="M5.5,8.5 L7.5,6.5 L9.5,8.5" stroke="#ccc" stroke-width="0.7" fill="none"/><path d="M17,6 L18.5,6 L20.5,4 L20.5,11 L18.5,9 L17,9 Z" fill="#ccc"/><path d="M22,5.5 C23,7 23,8 22,9.5" stroke="#ccc" stroke-width="0.5" fill="none"/><path d="M53.5,4 L61,4 L61,10.5 L57,10.5 L55,12.5 L55,10.5 L53.5,10.5 Z" stroke="#ddd" stroke-width="0.7" fill="none"/></svg>
<svg class="b" style="left:0;top:0" width="780" height="439" viewBox="0 0 780 439">
<rect x="0" y="72.8" width="780" height="336.7" fill="#ffffff"/>
<line x1="88.5" y1="81.5" x2="693.5" y2="81.5" stroke="#737373" stroke-width="0.95"/>
<line x1="88.5" y1="84.4" x2="693.5" y2="84.4" stroke="#737373" stroke-width="0.95"/>
<line x1="89" y1="81.5" x2="89" y2="402" stroke="#737373" stroke-width="0.95"/>
<line x1="91.7" y1="84.4" x2="91.7" y2="387.3" stroke="#737373" stroke-width="0.95"/>
<line x1="693.5" y1="81.5" x2="693.5" y2="402" stroke="#737373" stroke-width="0.95"/>
<line x1="690.5" y1="84.4" x2="690.5" y2="387.3" stroke="#737373" stroke-width="0.95"/>
<line x1="89" y1="402" x2="693.5" y2="402" stroke="#737373" stroke-width="0.95"/>
<line x1="91.7" y1="128.7" x2="690.5" y2="128.7" stroke="#737373" stroke-width="0.95"/>
<line x1="91.7" y1="131.4" x2="690.5" y2="131.4" stroke="#737373" stroke-width="0.95"/>
<line x1="91.7" y1="134.2" x2="578.8" y2="134.2" stroke="#737373" stroke-width="0.95"/>
<line x1="91.7" y1="387.3" x2="690.5" y2="387.3" stroke="#737373" stroke-width="0.95"/>
<line x1="145.2" y1="84.4" x2="145.2" y2="387.3" stroke="#737373" stroke-width="0.95"/>
<line x1="148.1" y1="84.4" x2="148.1" y2="387.3" stroke="#737373" stroke-width="0.95"/>
<line x1="201.1" y1="84.4" x2="201.1" y2="387.3" stroke="#737373" stroke-width="0.95"/>
<line x1="203.7" y1="84.4" x2="203.7" y2="387.3" stroke="#737373" stroke-width="0.95"/>
<line x1="309.3" y1="84.4" x2="309.3" y2="387.3" stroke="#737373" stroke-width="0.95"/>
<line x1="312.1" y1="84.4" x2="312.1" y2="255.2" stroke="#737373" stroke-width="0.95"/>
<line x1="578.8" y1="84.4" x2="578.8" y2="387.3" stroke="#737373" stroke-width="0.95"/>
<line x1="581.2" y1="84.4" x2="581.2" y2="387.3" stroke="#737373" stroke-width="0.95"/>
<line x1="634.9" y1="131.4" x2="634.9" y2="387.3" stroke="#737373" stroke-width="0.95"/>
<line x1="637.4" y1="131.4" x2="637.4" y2="387.3" stroke="#737373" stroke-width="0.95"/>
<line x1="91.7" y1="167.4" x2="201.1" y2="167.4" stroke="#737373" stroke-width="0.95"/>
<line x1="91.7" y1="170.5" x2="201.1" y2="170.5" stroke="#737373" stroke-width="0.95"/>
<line x1="91.7" y1="221.1" x2="201.1" y2="221.1" stroke="#737373" stroke-width="0.95"/>
<line x1="91.7" y1="224.5" x2="201.1" y2="224.5" stroke="#737373" stroke-width="0.95"/>
<line x1="91.7" y1="281.6" x2="201.1" y2="281.6" stroke="#737373" stroke-width="0.95"/>
<line x1="91.7" y1="284.5" x2="201.1" y2="284.5" stroke="#737373" stroke-width="0.95"/>
<line x1="91.7" y1="334.8" x2="201.1" y2="334.8" stroke="#737373" stroke-width="0.95"/>
<line x1="91.7" y1="337.6" x2="201.1" y2="337.6" stroke="#737373" stroke-width="0.95"/>
<line x1="581.2" y1="167.4" x2="690.5" y2="167.4" stroke="#737373" stroke-width="0.95"/>
<line x1="581.2" y1="169.9" x2="690.5" y2="169.9" stroke="#737373" stroke-width="0.95"/>
<line x1="581.2" y1="222.2" x2="690.5" y2="222.2" stroke="#737373" stroke-width="0.95"/>
<line x1="581.2" y1="224.4" x2="690.5" y2="224.4" stroke="#737373" stroke-width="0.95"/>
<line x1="581.2" y1="281" x2="690.5" y2="281" stroke="#737373" stroke-width="0.95"/>
<line x1="581.2" y1="283.9" x2="690.5" y2="283.9" stroke="#737373" stroke-width="0.95"/>
<line x1="581.2" y1="334.6" x2="690.5" y2="334.6" stroke="#737373" stroke-width="0.95"/>
<line x1="581.2" y1="337.5" x2="690.5" y2="337.5" stroke="#737373" stroke-width="0.95"/>
<line x1="203.7" y1="140.3" x2="309.3" y2="140.3" stroke="#737373" stroke-width="0.95"/>
<line x1="203.7" y1="143.8" x2="309.3" y2="143.8" stroke="#737373" stroke-width="0.95"/>
<line x1="312.1" y1="140.3" x2="578.8" y2="140.3" stroke="#737373" stroke-width="0.95"/>
<line x1="312.1" y1="143.8" x2="578.8" y2="143.8" stroke="#737373" stroke-width="0.95"/>
<rect x="204.20000000000002" y="137.4" width="1.2" height="9.6" stroke="#444444" stroke-width="0.6" fill="none"/>
<rect x="307.59999999999997" y="137.4" width="1.2" height="9.6" stroke="#444444" stroke-width="0.6" fill="none"/>
<rect x="312.59999999999997" y="137.4" width="1.2" height="9.6" stroke="#444444" stroke-width="0.6" fill="none"/>
<rect x="577.0" y="137.4" width="1.2" height="9.6" stroke="#444444" stroke-width="0.6" fill="none"/>
<path d="M224.79999999999998,140.8 C225.4,144 226.6,147 226.79999999999998,150.4" stroke="#444444" stroke-width="0.75" fill="none"/>
<path d="M226.79999999999998,150.4 C228.1,152 228.6,154 228.29999999999998,154.8 C227.6,156.5 226.4,157 226.4,158.3 L226.0,163.1 C226.2,165 227.5,166 227.5,167.1 C229.1,175 234.2,188 234.2,198 C234.2,205 230.6,218 227.7,224 L224.5,229.6 C224.0,235 224.2,243 224.0,247.3 C223.1,248.5 221.6,248.5 221.2,248.3 C218.6,247.5 217.1,245 216.5,240.8 C217.1,225 218.1,200 220.2,170 C220.0,169 218.6,168 216.79999999999998,166.3 C218.1,163 219.0,160 219.2,156 C220.1,154 221.6,152.5 222.4,152.8 C223.6,151.5 225.6,150.5 226.79999999999998,150.4" stroke="#444444" stroke-width="0.75" fill="none"/>
<path d="M222.4,159.1 C223.6,156 225.6,155 228.29999999999998,154.8" stroke="#444444" stroke-width="0.6" fill="none"/>
<path d="M221.2,170 L222.0,188" stroke="#444444" stroke-width="0.55" fill="none"/>
<path d="M220.1,239 L220.29999999999998,247.5" stroke="#444444" stroke-width="0.5" fill="none"/>
<path d="M245.6,140.8 C246.20000000000002,144 247.4,147 247.6,150.4" stroke="#444444" stroke-width="0.75" fill="none"/>
<path d="M247.6,150.4 C248.9,152 249.4,154 249.1,154.8 C248.4,156.5 247.20000000000002,157 247.20000000000002,158.3 L246.8,163.1 C247.0,165 248.3,166 248.3,167.1 C249.9,175 255.0,188 255.0,198 C255.0,205 251.4,218 248.5,224 L245.3,229.6 C244.8,235 245.0,243 244.8,247.3 C243.9,248.5 242.4,248.5 242.0,248.3 C239.4,247.5 237.9,245 237.3,240.8 C237.9,225 238.9,200 241.0,170 C240.8,169 239.4,168 237.6,166.3 C238.9,163 239.8,160 240.0,156 C240.9,154 242.4,152.5 243.20000000000002,152.8 C244.4,151.5 246.4,150.5 247.6,150.4" stroke="#444444" stroke-width="0.75" fill="none"/>
<path d="M243.20000000000002,159.1 C244.4,156 246.4,155 249.1,154.8" stroke="#444444" stroke-width="0.6" fill="none"/>
<path d="M242.0,170 L242.8,188" stroke="#444444" stroke-width="0.55" fill="none"/>
<path d="M240.9,239 L241.1,247.5" stroke="#444444" stroke-width="0.5" fill="none"/>
<path d="M267.2,140.8 C267.8,144 269,147 269.2,150.4" stroke="#444444" stroke-width="0.75" fill="none"/>
<path d="M269.2,150.4 C270.5,152 271,154 270.7,154.8 C270,156.5 268.8,157 268.8,158.3 L268.4,163.1 C268.6,165 269.9,166 269.9,167.1 C271.5,175 276.6,188 276.6,198 C276.6,205 273,218 270.1,224 L266.9,229.6 C266.4,235 266.6,243 266.4,247.3 C265.5,248.5 264,248.5 263.6,248.3 C261,247.5 259.5,245 258.9,240.8 C259.5,225 260.5,200 262.6,170 C262.4,169 261,168 259.2,166.3 C260.5,163 261.4,160 261.6,156 C262.5,154 264,152.5 264.8,152.8 C266,151.5 268,150.5 269.2,150.4" stroke="#444444" stroke-width="0.75" fill="none"/>
<path d="M264.8,159.1 C266,156 268,155 270.7,154.8" stroke="#444444" stroke-width="0.6" fill="none"/>
<path d="M263.6,170 L264.4,188" stroke="#444444" stroke-width="0.55" fill="none"/>
<path d="M262.5,239 L262.7,247.5" stroke="#444444" stroke-width="0.5" fill="none"/>
<path d="M289.0,140.8 C289.6,144 290.8,147 291.0,150.4" stroke="#444444" stroke-width="0.75" fill="none"/>
<path d="M291.0,150.4 C292.3,152 292.8,154 292.5,154.8 C291.8,156.5 290.6,157 290.6,158.3 L290.2,163.1 C290.40000000000003,165 291.7,166 291.7,167.1 C293.3,175 298.40000000000003,188 298.40000000000003,198 C298.40000000000003,205 294.8,218 291.90000000000003,224 L288.7,229.6 C288.2,235 288.40000000000003,243 288.2,247.3 C287.3,248.5 285.8,248.5 285.40000000000003,248.3 C282.8,247.5 281.3,245 280.7,240.8 C281.3,225 282.3,200 284.40000000000003,170 C284.2,169 282.8,168 281.0,166.3 C282.3,163 283.2,160 283.40000000000003,156 C284.3,154 285.8,152.5 286.6,152.8 C287.8,151.5 289.8,150.5 291.0,150.4" stroke="#444444" stroke-width="0.75" fill="none"/>
<path d="M286.6,159.1 C287.8,156 289.8,155 292.5,154.8" stroke="#444444" stroke-width="0.6" fill="none"/>
<path d="M285.40000000000003,170 L286.2,188" stroke="#444444" stroke-width="0.55" fill="none"/>
<path d="M284.3,239 L284.5,247.5" stroke="#444444" stroke-width="0.5" fill="none"/>
<path d="M325.2,140.8 C325.8,144 327.0,147 327.2,150.4" stroke="#444444" stroke-width="0.75" fill="none"/>
<path d="M327.2,150.4 C328.5,152 329.0,154 328.7,154.8 C328.0,156.5 326.8,157 326.8,158.3 L326.4,163.1 C326.6,165 327.9,166 327.9,167.1 C329.5,175 334.6,188 334.6,198 C334.6,205 331.0,218 328.1,224 L324.9,229.6 C324.4,235 324.6,243 324.4,247.3 C323.5,248.5 322.0,248.5 321.6,248.3 C319.0,247.5 317.5,245 316.9,240.8 C317.5,225 318.5,200 320.6,170 C320.4,169 319.0,168 317.2,166.3 C318.5,163 319.4,160 319.6,156 C320.5,154 322.0,152.5 322.8,152.8 C324.0,151.5 326.0,150.5 327.2,150.4" stroke="#444444" stroke-width="0.75" fill="none"/>
<path d="M322.8,159.1 C324.0,156 326.0,155 328.7,154.8" stroke="#444444" stroke-width="0.6" fill="none"/>
<path d="M321.6,170 L322.4,188" stroke="#444444" stroke-width="0.55" fill="none"/>
<path d="M320.5,239 L320.7,247.5" stroke="#444444" stroke-width="0.5" fill="none"/>
<path d="M347.0,140.8 C347.6,144 348.8,147 349.0,150.4" stroke="#444444" stroke-width="0.75" fill="none"/>
<path d="M349.0,150.4 C350.3,152 350.8,154 350.5,154.8 C349.8,156.5 348.6,157 348.6,158.3 L348.2,163.1 C348.40000000000003,165 349.7,166 349.7,167.1 C351.3,175 356.40000000000003,188 356.40000000000003,198 C356.40000000000003,205 352.8,218 349.90000000000003,224 L346.7,229.6 C346.2,235 346.40000000000003,243 346.2,247.3 C345.3,248.5 343.8,248.5 343.40000000000003,248.3 C340.8,247.5 339.3,245 338.7,240.8 C339.3,225 340.3,200 342.40000000000003,170 C342.2,169 340.8,168 339.0,166.3 C340.3,163 341.2,160 341.40000000000003,156 C342.3,154 343.8,152.5 344.6,152.8 C345.8,151.5 347.8,150.5 349.0,150.4" stroke="#444444" stroke-width="0.75" fill="none"/>
<path d="M344.6,159.1 C345.8,156 347.8,155 350.5,154.8" stroke="#444444" stroke-width="0.6" fill="none"/>
<path d="M343.40000000000003,170 L344.2,188" stroke="#444444" stroke-width="0.55" fill="none"/>
<path d="M342.3,239 L342.5,247.5" stroke="#444444" stroke-width="0.5" fill="none"/>
<path d="M368.8,140.8 C369.40000000000003,144 370.6,147 370.8,150.4" stroke="#444444" stroke-width="0.75" fill="none"/>
<path d="M370.8,150.4 C372.1,152 372.6,154 372.3,154.8 C371.6,156.5 370.40000000000003,157 370.40000000000003,158.3 L370.0,163.1 C370.20000000000005,165 371.5,166 371.5,167.1 C373.1,175 378.20000000000005,188 378.20000000000005,198 C378.20000000000005,205 374.6,218 371.70000000000005,224 L368.5,229.6 C368.0,235 368.20000000000005,243 368.0,247.3 C367.1,248.5 365.6,248.5 365.20000000000005,248.3 C362.6,247.5 361.1,245 360.5,240.8 C361.1,225 362.1,200 364.20000000000005,170 C364.0,169 362.6,168 360.8,166.3 C362.1,163 363.0,160 363.20000000000005,156 C364.1,154 365.6,152.5 366.40000000000003,152.8 C367.6,151.5 369.6,150.5 370.8,150.4" stroke="#444444" stroke-width="0.75" fill="none"/>
<path d="M366.40000000000003,159.1 C367.6,156 369.6,155 372.3,154.8" stroke="#444444" stroke-width="0.6" fill="none"/>
<path d="M365.20000000000005,170 L366.0,188" stroke="#444444" stroke-width="0.55" fill="none"/>
<path d="M364.1,239 L364.3,247.5" stroke="#444444" stroke-width="0.5" fill="none"/>
<path d="M390.59999999999997,140.8 C391.2,144 392.4,147 392.59999999999997,150.4" stroke="#444444" stroke-width="0.75" fill="none"/>
<path d="M392.59999999999997,150.4 C393.9,152 394.4,154 394.09999999999997,154.8 C393.4,156.5 392.2,157 392.2,158.3 L391.79999999999995,163.1 C392.0,165 393.29999999999995,166 393.29999999999995,167.1 C394.9,175 400.0,188 400.0,198 C400.0,205 396.4,218 393.5,224 L390.29999999999995,229.6 C389.79999999999995,235 390.0,243 389.79999999999995,247.3 C388.9,248.5 387.4,248.5 387.0,248.3 C384.4,247.5 382.9,245 382.29999999999995,240.8 C382.9,225 383.9,200 386.0,170 C385.79999999999995,169 384.4,168 382.59999999999997,166.3 C383.9,163 384.79999999999995,160 385.0,156 C385.9,154 387.4,152.5 388.2,152.8 C389.4,151.5 391.4,150.5 392.59999999999997,150.4" stroke="#444444" stroke-width="0.75" fill="none"/>
<path d="M388.2,159.1 C389.4,156 391.4,155 394.09999999999997,154.8" stroke="#444444" stroke-width="0.6" fill="none"/>
<path d="M387.0,170 L387.79999999999995,188" stroke="#444444" stroke-width="0.55" fill="none"/>
<path d="M385.9,239 L386.09999999999997,247.5" stroke="#444444" stroke-width="0.5" fill="none"/>
<path d="M412.4,140.8 C413.0,144 414.2,147 414.4,150.4" stroke="#444444" stroke-width="0.75" fill="none"/>
<path d="M414.4,150.4 C415.7,152 416.2,154 415.9,154.8 C415.2,156.5 414.0,157 414.0,158.3 L413.59999999999997,163.1 C413.8,165 415.09999999999997,166 415.09999999999997,167.1 C416.7,175 421.8,188 421.8,198 C421.8,205 418.2,218 415.3,224 L412.09999999999997,229.6 C411.59999999999997,235 411.8,243 411.59999999999997,247.3 C410.7,248.5 409.2,248.5 408.8,248.3 C406.2,247.5 404.7,245 404.09999999999997,240.8 C404.7,225 405.7,200 407.8,170 C407.59999999999997,169 406.2,168 404.4,166.3 C405.7,163 406.59999999999997,160 406.8,156 C407.7,154 409.2,152.5 410.0,152.8 C411.2,151.5 413.2,150.5 414.4,150.4" stroke="#444444" stroke-width="0.75" fill="none"/>
<path d="M410.0,159.1 C411.2,156 413.2,155 415.9,154.8" stroke="#444444" stroke-width="0.6" fill="none"/>
<path d="M408.8,170 L409.59999999999997,188" stroke="#444444" stroke-width="0.55" fill="none"/>
<path d="M407.7,239 L407.9,247.5" stroke="#444444" stroke-width="0.5" fill="none"/>
<path d="M434.2,140.8 C434.8,144 436.0,147 436.2,150.4" stroke="#444444" stroke-width="0.75" fill="none"/>
<path d="M436.2,150.4 C437.5,152 438.0,154 437.7,154.8 C437.0,156.5 435.8,157 435.8,158.3 L435.4,163.1 C435.6,165 436.9,166 436.9,167.1 C438.5,175 443.6,188 443.6,198 C443.6,205 440.0,218 437.1,224 L433.9,229.6 C433.4,235 433.6,243 433.4,247.3 C432.5,248.5 431.0,248.5 430.6,248.3 C428.0,247.5 426.5,245 425.9,240.8 C426.5,225 427.5,200 429.6,170 C429.4,169 428.0,168 426.2,166.3 C427.5,163 428.4,160 428.6,156 C429.5,154 431.0,152.5 431.8,152.8 C433.0,151.5 435.0,150.5 436.2,150.4" stroke="#444444" stroke-width="0.75" fill="none"/>
<path d="M431.8,159.1 C433.0,156 435.0,155 437.7,154.8" stroke="#444444" stroke-width="0.6" fill="none"/>
<path d="M430.6,170 L431.4,188" stroke="#444444" stroke-width="0.55" fill="none"/>
<path d="M429.5,239 L429.7,247.5" stroke="#444444" stroke-width="0.5" fill="none"/>
<path d="M456.0,140.8 C456.6,144 457.8,147 458.0,150.4" stroke="#444444" stroke-width="0.75" fill="none"/>
<path d="M458.0,150.4 C459.3,152 459.8,154 459.5,154.8 C458.8,156.5 457.6,157 457.6,158.3 L457.2,163.1 C457.40000000000003,165 458.7,166 458.7,167.1 C460.3,175 465.40000000000003,188 465.40000000000003,198 C465.40000000000003,205 461.8,218 458.90000000000003,224 L455.7,229.6 C455.2,235 455.40000000000003,243 455.2,247.3 C454.3,248.5 452.8,248.5 452.40000000000003,248.3 C449.8,247.5 448.3,245 447.7,240.8 C448.3,225 449.3,200 451.40000000000003,170 C451.2,169 449.8,168 448.0,166.3 C449.3,163 450.2,160 450.40000000000003,156 C451.3,154 452.8,152.5 453.6,152.8 C454.8,151.5 456.8,150.5 458.0,150.4" stroke="#444444" stroke-width="0.75" fill="none"/>
<path d="M453.6,159.1 C454.8,156 456.8,155 459.5,154.8" stroke="#444444" stroke-width="0.6" fill="none"/>
<path d="M452.40000000000003,170 L453.2,188" stroke="#444444" stroke-width="0.55" fill="none"/>
<path d="M451.3,239 L451.5,247.5" stroke="#444444" stroke-width="0.5" fill="none"/>
<path d="M477.8,140.8 C478.40000000000003,144 479.6,147 479.8,150.4" stroke="#444444" stroke-width="0.75" fill="none"/>
<path d="M479.8,150.4 C481.1,152 481.6,154 481.3,154.8 C480.6,156.5 479.40000000000003,157 479.40000000000003,158.3 L479.0,163.1 C479.20000000000005,165 480.5,166 480.5,167.1 C482.1,175 487.20000000000005,188 487.20000000000005,198 C487.20000000000005,205 483.6,218 480.70000000000005,224 L477.5,229.6 C477.0,235 477.20000000000005,243 477.0,247.3 C476.1,248.5 474.6,248.5 474.20000000000005,248.3 C471.6,247.5 470.1,245 469.5,240.8 C470.1,225 471.1,200 473.20000000000005,170 C473.0,169 471.6,168 469.8,166.3 C471.1,163 472.0,160 472.20000000000005,156 C473.1,154 474.6,152.5 475.40000000000003,152.8 C476.6,151.5 478.6,150.5 479.8,150.4" stroke="#444444" stroke-width="0.75" fill="none"/>
<path d="M475.40000000000003,159.1 C476.6,156 478.6,155 481.3,154.8" stroke="#444444" stroke-width="0.6" fill="none"/>
<path d="M474.20000000000005,170 L475.0,188" stroke="#444444" stroke-width="0.55" fill="none"/>
<path d="M473.1,239 L473.3,247.5" stroke="#444444" stroke-width="0.5" fill="none"/>
<path d="M499.59999999999997,140.8 C500.2,144 501.4,147 501.59999999999997,150.4" stroke="#444444" stroke-width="0.75" fill="none"/>
<path d="M501.59999999999997,150.4 C502.9,152 503.4,154 503.09999999999997,154.8 C502.4,156.5 501.2,157 501.2,158.3 L500.79999999999995,163.1 C501.0,165 502.29999999999995,166 502.29999999999995,167.1 C503.9,175 509.0,188 509.0,198 C509.0,205 505.4,218 502.5,224 L499.29999999999995,229.6 C498.79999999999995,235 499.0,243 498.79999999999995,247.3 C497.9,248.5 496.4,248.5 496.0,248.3 C493.4,247.5 491.9,245 491.29999999999995,240.8 C491.9,225 492.9,200 495.0,170 C494.79999999999995,169 493.4,168 491.59999999999997,166.3 C492.9,163 493.79999999999995,160 494.0,156 C494.9,154 496.4,152.5 497.2,152.8 C498.4,151.5 500.4,150.5 501.59999999999997,150.4" stroke="#444444" stroke-width="0.75" fill="none"/>
<path d="M497.2,159.1 C498.4,156 500.4,155 503.09999999999997,154.8" stroke="#444444" stroke-width="0.6" fill="none"/>
<path d="M496.0,170 L496.79999999999995,188" stroke="#444444" stroke-width="0.55" fill="none"/>
<path d="M494.9,239 L495.09999999999997,247.5" stroke="#444444" stroke-width="0.5" fill="none"/>
<path d="M521.4000000000001,140.8 C522.0,144 523.2,147 523.4000000000001,150.4" stroke="#444444" stroke-width="0.75" fill="none"/>
<path d="M523.4000000000001,150.4 C524.7,152 525.2,154 524.9000000000001,154.8 C524.2,156.5 523.0,157 523.0,158.3 L522.6,163.1 C522.8000000000001,165 524.1,166 524.1,167.1 C525.7,175 530.8000000000001,188 530.8000000000001,198 C530.8000000000001,205 527.2,218 524.3000000000001,224 L521.1,229.6 C520.6,235 520.8000000000001,243 520.6,247.3 C519.7,248.5 518.2,248.5 517.8000000000001,248.3 C515.2,247.5 513.7,245 513.1,240.8 C513.7,225 514.7,200 516.8000000000001,170 C516.6,169 515.2,168 513.4000000000001,166.3 C514.7,163 515.6,160 515.8000000000001,156 C516.7,154 518.2,152.5 519.0,152.8 C520.2,151.5 522.2,150.5 523.4000000000001,150.4" stroke="#444444" stroke-width="0.75" fill="none"/>
<path d="M519.0,159.1 C520.2,156 522.2,155 524.9000000000001,154.8" stroke="#444444" stroke-width="0.6" fill="none"/>
<path d="M517.8000000000001,170 L518.6,188" stroke="#444444" stroke-width="0.55" fill="none"/>
<path d="M516.7,239 L516.9000000000001,247.5" stroke="#444444" stroke-width="0.5" fill="none"/>
<path d="M543.2,140.8 C543.8,144 545.0,147 545.2,150.4" stroke="#444444" stroke-width="0.75" fill="none"/>
<path d="M545.2,150.4 C546.5,152 547.0,154 546.7,154.8 C546.0,156.5 544.8,157 544.8,158.3 L544.4,163.1 C544.6,165 545.9,166 545.9,167.1 C547.5,175 552.6,188 552.6,198 C552.6,205 549.0,218 546.1,224 L542.9,229.6 C542.4,235 542.6,243 542.4,247.3 C541.5,248.5 540.0,248.5 539.6,248.3 C537.0,247.5 535.5,245 534.9,240.8 C535.5,225 536.5,200 538.6,170 C538.4,169 537.0,168 535.2,166.3 C536.5,163 537.4,160 537.6,156 C538.5,154 540.0,152.5 540.8,152.8 C542.0,151.5 544.0,150.5 545.2,150.4" stroke="#444444" stroke-width="0.75" fill="none"/>
<path d="M540.8,159.1 C542.0,156 544.0,155 546.7,154.8" stroke="#444444" stroke-width="0.6" fill="none"/>
<path d="M539.6,170 L540.4,188" stroke="#444444" stroke-width="0.55" fill="none"/>
<path d="M538.5,239 L538.7,247.5" stroke="#444444" stroke-width="0.5" fill="none"/>
<path d="M565.0,140.8 C565.5999999999999,144 566.8,147 567.0,150.4" stroke="#444444" stroke-width="0.75" fill="none"/>
<path d="M567.0,150.4 C568.3,152 568.8,154 568.5,154.8 C567.8,156.5 566.5999999999999,157 566.5999999999999,158.3 L566.1999999999999,163.1 C566.4,165 567.6999999999999,166 567.6999999999999,167.1 C569.3,175 574.4,188 574.4,198 C574.4,205 570.8,218 567.9,224 L564.6999999999999,229.6 C564.1999999999999,235 564.4,243 564.1999999999999,247.3 C563.3,248.5 561.8,248.5 561.4,248.3 C558.8,247.5 557.3,245 556.6999999999999,240.8 C557.3,225 558.3,200 560.4,170 C560.1999999999999,169 558.8,168 557.0,166.3 C558.3,163 559.1999999999999,160 559.4,156 C560.3,154 561.8,152.5 562.5999999999999,152.8 C563.8,151.5 565.8,150.5 567.0,150.4" stroke="#444444" stroke-width="0.75" fill="none"/>
<path d="M562.5999999999999,159.1 C563.8,156 565.8,155 568.5,154.8" stroke="#444444" stroke-width="0.6" fill="none"/>
<path d="M561.4,170 L562.1999999999999,188" stroke="#444444" stroke-width="0.55" fill="none"/>
<path d="M560.3,239 L560.5,247.5" stroke="#444444" stroke-width="0.5" fill="none"/>
<rect x="363.5" y="88.2" width="51.10000000000002" height="40.1" stroke="#444444" stroke-width="0.75" fill="none"/>
<line x1="363.5" y1="93.4" x2="414.6" y2="93.4" stroke="#737373" stroke-width="0.95"/>
<rect x="381.55" y="93.4" width="15" height="3.3" stroke="#444444" stroke-width="0.6" fill="none"/>
<rect x="432.8" y="88.2" width="50.69999999999999" height="40.1" stroke="#444444" stroke-width="0.75" fill="none"/>
<line x1="432.8" y1="93.4" x2="483.5" y2="93.4" stroke="#737373" stroke-width="0.95"/>
<rect x="450.65" y="93.4" width="15" height="3.3" stroke="#444444" stroke-width="0.6" fill="none"/>
<rect x="500.4" y="88.2" width="51.30000000000007" height="40.1" stroke="#444444" stroke-width="0.75" fill="none"/>
<line x1="500.4" y1="93.4" x2="551.7" y2="93.4" stroke="#737373" stroke-width="0.95"/>
<rect x="518.55" y="93.4" width="15" height="3.3" stroke="#444444" stroke-width="0.6" fill="none"/>
<path d="M233.6,128.3 C224.0,126.0 221.0,122.0 221.0,112.0 C221.0,106.0 227.0,102.0 226.0,96.0 C225.0,90.0 228.0,88.5 230.0,89.0 C234.0,90.0 236.0,95.0 242.0,97.0 C252.0,98.5 270.0,98.0 289.0,99.8 C295.0,101.0 294.0,107.0 292.5,111.5 L286.5,121.0" stroke="#444444" stroke-width="0.75" fill="none"/>
<path d="M236.3,128.3 C237.0,120.0 237.0,110.0 242.0,106.0 C247.0,103.0 251.0,106.0 256.0,109.0 C260.0,112.0 264.0,112.0 267.0,115.0 C272.0,117.0 278.0,117.0 282.0,118.5 C287.0,120.0 287.5,124.0 287.2,128.3" stroke="#444444" stroke-width="0.75" fill="none"/>
<path d="M242.4,128.3 L252.7,108.6" stroke="#444444" stroke-width="0.6" fill="none"/>
<path d="M246.7,128.3 L256.0,110.3" stroke="#444444" stroke-width="0.6" fill="none"/>
<path d="M258.2,128.3 L265.9,114.1" stroke="#444444" stroke-width="0.6" fill="none"/>
<path d="M261.5,128.3 L268.6,115.7" stroke="#444444" stroke-width="0.6" fill="none"/>
<path d="M270.8,128.3 L276.8,117.9" stroke="#444444" stroke-width="0.6" fill="none"/>
<path d="M274.6,128.3 L280.6,118.5" stroke="#444444" stroke-width="0.6" fill="none"/>
<path d="M610.6,128.7 C601.0,126.4 598.0,122.4 598.0,112.4 C598.0,106.4 604.0,102.4 603.0,96.4 C602.0,90.4 605.0,88.9 607.0,89.4 C611.0,90.4 613.0,95.4 619.0,97.4 C629.0,98.9 647.0,98.4 666.0,100.2 C672.0,101.4 671.0,107.4 669.5,111.9 L663.5,121.4" stroke="#444444" stroke-width="0.75" fill="none"/>
<path d="M613.3,128.7 C614.0,120.4 614.0,110.4 619.0,106.4 C624.0,103.4 628.0,106.4 633.0,109.4 C637.0,112.4 641.0,112.4 644.0,115.4 C649.0,117.4 655.0,117.4 659.0,118.9 C664.0,120.4 664.5,124.4 664.2,128.7" stroke="#444444" stroke-width="0.75" fill="none"/>
<path d="M619.4,128.7 L629.7,109.0" stroke="#444444" stroke-width="0.6" fill="none"/>
<path d="M623.7,128.7 L633.0,110.7" stroke="#444444" stroke-width="0.6" fill="none"/>
<path d="M635.2,128.7 L642.9,114.5" stroke="#444444" stroke-width="0.6" fill="none"/>
<path d="M638.5,128.7 L645.6,116.1" stroke="#444444" stroke-width="0.6" fill="none"/>
<path d="M647.8,128.7 L653.8,118.3" stroke="#444444" stroke-width="0.6" fill="none"/>
<path d="M651.6,128.7 L657.6,118.9" stroke="#444444" stroke-width="0.6" fill="none"/>
<rect x="103.7" y="199.5" width="29" height="21.7" stroke="#444444" stroke-width="0.75" fill="none"/>
<path d="M103.7,199.5 A14.5,14.790000000000001 0 0 1 132.7,199.5" stroke="#444444" stroke-width="0.75" fill="none"/>
<path d="M105.0,199.5 A13.2,13.0 0 0 1 131.39999999999998,199.5" stroke="#444444" stroke-width="0.6" fill="none"/>
<circle cx="118.0" cy="204.5" r="0.9" fill="#555"/>
<rect x="160.3" y="259.5" width="29" height="21.7" stroke="#444444" stroke-width="0.75" fill="none"/>
<path d="M160.3,259.5 A14.5,14.790000000000001 0 0 1 189.3,259.5" stroke="#444444" stroke-width="0.75" fill="none"/>
<path d="M161.60000000000002,259.5 A13.2,13.0 0 0 1 188.0,259.5" stroke="#444444" stroke-width="0.6" fill="none"/>
<circle cx="174.60000000000002" cy="264.5" r="0.9" fill="#555"/>
<rect x="588.0999999999999" y="143.95000000000005" width="39.6" height="2.85" stroke="#444444" stroke-width="0.7" fill="none"/>
<rect x="586.1999999999999" y="147.30000000000004" width="39.1" height="2.85" stroke="#444444" stroke-width="0.7" fill="none"/>
<rect x="586.1999999999999" y="150.65000000000003" width="39.1" height="2.85" stroke="#444444" stroke-width="0.7" fill="none"/>
<rect x="588.0999999999999" y="154.00000000000003" width="39.6" height="2.85" stroke="#444444" stroke-width="0.7" fill="none"/>
<rect x="585.8" y="157.35000000000002" width="39.2" height="2.85" stroke="#444444" stroke-width="0.7" fill="none"/>
<rect x="585.8" y="160.70000000000005" width="39.2" height="2.85" stroke="#444444" stroke-width="0.7" fill="none"/>
<rect x="588.0999999999999" y="164.05000000000004" width="39.6" height="2.85" stroke="#444444" stroke-width="0.7" fill="none"/>
<rect x="644.0999999999999" y="198.15000000000003" width="39.6" height="2.85" stroke="#444444" stroke-width="0.7" fill="none"/>
<rect x="642.1999999999999" y="201.50000000000003" width="39.1" height="2.85" stroke="#444444" stroke-width="0.7" fill="none"/>
<rect x="642.1999999999999" y="204.85000000000002" width="39.1" height="2.85" stroke="#444444" stroke-width="0.7" fill="none"/>
<rect x="644.0999999999999" y="208.20000000000002" width="39.6" height="2.85" stroke="#444444" stroke-width="0.7" fill="none"/>
<rect x="641.8" y="211.55" width="39.2" height="2.85" stroke="#444444" stroke-width="0.7" fill="none"/>
<rect x="641.8" y="214.90000000000003" width="39.2" height="2.85" stroke="#444444" stroke-width="0.7" fill="none"/>
<rect x="644.0999999999999" y="218.25000000000003" width="39.6" height="2.85" stroke="#444444" stroke-width="0.7" fill="none"/>
<rect x="588.6999999999999" y="257.25000000000006" width="39.6" height="2.85" stroke="#444444" stroke-width="0.7" fill="none"/>
<rect x="586.8" y="260.6" width="39.1" height="2.85" stroke="#444444" stroke-width="0.7" fill="none"/>
<rect x="586.8" y="263.95000000000005" width="39.1" height="2.85" stroke="#444444" stroke-width="0.7" fill="none"/>
<rect x="588.6999999999999" y="267.30000000000007" width="39.6" height="2.85" stroke="#444444" stroke-width="0.7" fill="none"/>
<rect x="586.4" y="270.65000000000003" width="39.2" height="2.85" stroke="#444444" stroke-width="0.7" fill="none"/>
<rect x="586.4" y="274.00000000000006" width="39.2" height="2.85" stroke="#444444" stroke-width="0.7" fill="none"/>
<rect x="588.6999999999999" y="277.35" width="39.6" height="2.85" stroke="#444444" stroke-width="0.7" fill="none"/>
<rect x="644.0999999999999" y="310.85" width="39.6" height="2.85" stroke="#444444" stroke-width="0.7" fill="none"/>
<rect x="642.1999999999999" y="314.2" width="39.1" height="2.85" stroke="#444444" stroke-width="0.7" fill="none"/>
<rect x="642.1999999999999" y="317.55" width="39.1" height="2.85" stroke="#444444" stroke-width="0.7" fill="none"/>
<rect x="644.0999999999999" y="320.90000000000003" width="39.6" height="2.85" stroke="#444444" stroke-width="0.7" fill="none"/>
<rect x="641.8" y="324.25" width="39.2" height="2.85" stroke="#444444" stroke-width="0.7" fill="none"/>
<rect x="641.8" y="327.6" width="39.2" height="2.85" stroke="#444444" stroke-width="0.7" fill="none"/>
<rect x="644.0999999999999" y="330.95" width="39.6" height="2.85" stroke="#444444" stroke-width="0.7" fill="none"/>
<rect x="586.0999999999999" y="362.85" width="39.6" height="2.85" stroke="#444444" stroke-width="0.7" fill="none"/>
<rect x="584.1999999999999" y="366.2" width="39.1" height="2.85" stroke="#444444" stroke-width="0.7" fill="none"/>
<rect x="584.1999999999999" y="369.55" width="39.1" height="2.85" stroke="#444444" stroke-width="0.7" fill="none"/>
<rect x="586.0999999999999" y="372.90000000000003" width="39.6" height="2.85" stroke="#444444" stroke-width="0.7" fill="none"/>
<rect x="583.8" y="376.25" width="39.2" height="2.85" stroke="#444444" stroke-width="0.7" fill="none"/>
<rect x="583.8" y="379.6" width="39.2" height="2.85" stroke="#444444" stroke-width="0.7" fill="none"/>
<rect x="586.0999999999999" y="382.95" width="39.6" height="2.85" stroke="#444444" stroke-width="0.7" fill="none"/>
<path d="M205.79999999999998,318.8 C206.4,330 205.29999999999998,345 206.2,360 C206.6,368 205.79999999999998,374 206.1,378.6 C206.2,381 206.79999999999998,383.2 208.6,383.6 L219.4,383 C219.9,380 219.6,378 219.6,374 C219.0,360 219.6,345 219.0,330 C218.79999999999998,325 219.0,320 218.9,316.8" stroke="#4a4a4a" stroke-width="0.75" fill="none"/>
<ellipse cx="212.35" cy="317.7" rx="6.75" ry="1.9" transform="rotate(-8 212.35 317.7)" stroke="#4a4a4a" stroke-width="0.7" fill="none"/>
<path d="M212.29999999999998,319.3 C212.0,340 212.6,360 212.29999999999998,378" stroke="#6a6a6a" stroke-width="0.55" fill="none"/>
<path d="M206.1,378.3 C209.6,381.5 215.6,381 219.6,376.5" stroke="#4a4a4a" stroke-width="0.65" fill="none"/>
<path d="M223.0,318.8 C223.60000000000002,330 222.5,345 223.4,360 C223.8,368 223.0,374 223.3,378.6 C223.4,381 224.0,383.2 225.8,383.6 L236.60000000000002,383 C237.10000000000002,380 236.8,378 236.8,374 C236.20000000000002,360 236.8,345 236.20000000000002,330 C236.0,325 236.20000000000002,320 236.10000000000002,316.8" stroke="#4a4a4a" stroke-width="0.75" fill="none"/>
<ellipse cx="229.55" cy="317.7" rx="6.75" ry="1.9" transform="rotate(-8 229.55 317.7)" stroke="#4a4a4a" stroke-width="0.7" fill="none"/>
<path d="M229.5,319.3 C229.20000000000002,340 229.8,360 229.5,378" stroke="#6a6a6a" stroke-width="0.55" fill="none"/>
<path d="M223.3,378.3 C226.8,381.5 232.8,381 236.8,376.5" stroke="#4a4a4a" stroke-width="0.65" fill="none"/>
<path d="M239.79999999999998,318.8 C240.4,330 239.29999999999998,345 240.2,360 C240.6,368 239.79999999999998,374 240.1,378.6 C240.2,381 240.79999999999998,383.2 242.6,383.6 L253.4,383 C253.9,380 253.6,378 253.6,374 C253.0,360 253.6,345 253.0,330 C252.79999999999998,325 253.0,320 252.9,316.8" stroke="#4a4a4a" stroke-width="0.75" fill="none"/>
<ellipse cx="246.35" cy="317.7" rx="6.75" ry="1.9" transform="rotate(-8 246.35 317.7)" stroke="#4a4a4a" stroke-width="0.7" fill="none"/>
<path d="M246.29999999999998,319.3 C246.0,340 246.6,360 246.29999999999998,378" stroke="#6a6a6a" stroke-width="0.55" fill="none"/>
<path d="M240.1,378.3 C243.6,381.5 249.6,381 253.6,376.5" stroke="#4a4a4a" stroke-width="0.65" fill="none"/>
<path d="M257.59999999999997,318.8 C258.2,330 257.09999999999997,345 258.0,360 C258.4,368 257.59999999999997,374 257.9,378.6 C258.0,381 258.59999999999997,383.2 260.4,383.6 L271.2,383 C271.7,380 271.4,378 271.4,374 C270.79999999999995,360 271.4,345 270.79999999999995,330 C270.59999999999997,325 270.79999999999995,320 270.7,316.8" stroke="#4a4a4a" stroke-width="0.75" fill="none"/>
<ellipse cx="264.15" cy="317.7" rx="6.75" ry="1.9" transform="rotate(-8 264.15 317.7)" stroke="#4a4a4a" stroke-width="0.7" fill="none"/>
<path d="M264.09999999999997,319.3 C263.79999999999995,340 264.4,360 264.09999999999997,378" stroke="#6a6a6a" stroke-width="0.55" fill="none"/>
<path d="M257.9,378.3 C261.4,381.5 267.4,381 271.4,376.5" stroke="#4a4a4a" stroke-width="0.65" fill="none"/>
<path d="M274.8,318.8 C275.40000000000003,330 274.3,345 275.20000000000005,360 C275.6,368 274.8,374 275.1,378.6 C275.20000000000005,381 275.8,383.2 277.6,383.6 L288.40000000000003,383 C288.90000000000003,380 288.6,378 288.6,374 C288.0,360 288.6,345 288.0,330 C287.8,325 288.0,320 287.90000000000003,316.8" stroke="#4a4a4a" stroke-width="0.75" fill="none"/>
<ellipse cx="281.35" cy="317.7" rx="6.75" ry="1.9" transform="rotate(-8 281.35 317.7)" stroke="#4a4a4a" stroke-width="0.7" fill="none"/>
<path d="M281.3,319.3 C281.0,340 281.6,360 281.3,378" stroke="#6a6a6a" stroke-width="0.55" fill="none"/>
<path d="M275.1,378.3 C278.6,381.5 284.6,381 288.6,376.5" stroke="#4a4a4a" stroke-width="0.65" fill="none"/>
<path d="M292.0,318.8 C292.6,330 291.5,345 292.40000000000003,360 C292.8,368 292.0,374 292.3,378.6 C292.40000000000003,381 293.0,383.2 294.8,383.6 L305.6,383 C306.1,380 305.8,378 305.8,374 C305.2,360 305.8,345 305.2,330 C305.0,325 305.2,320 305.1,316.8" stroke="#4a4a4a" stroke-width="0.75" fill="none"/>
<ellipse cx="298.55" cy="317.7" rx="6.75" ry="1.9" transform="rotate(-8 298.55 317.7)" stroke="#4a4a4a" stroke-width="0.7" fill="none"/>
<path d="M298.5,319.3 C298.2,340 298.8,360 298.5,378" stroke="#6a6a6a" stroke-width="0.55" fill="none"/>
<path d="M292.3,378.3 C295.8,381.5 301.8,381 305.8,376.5" stroke="#4a4a4a" stroke-width="0.65" fill="none"/>
<line x1="309.3" y1="255.2" x2="392.5" y2="255.2" stroke="#737373" stroke-width="0.95"/>
<line x1="392.5" y1="255.2" x2="392.5" y2="387.3" stroke="#737373" stroke-width="0.95"/>
<line x1="309.3" y1="281.5" x2="392.5" y2="281.5" stroke="#737373" stroke-width="0.95"/>
<line x1="309.3" y1="308.4" x2="392.5" y2="308.4" stroke="#737373" stroke-width="0.95"/>
<line x1="309.3" y1="334.6" x2="392.5" y2="334.6" stroke="#737373" stroke-width="0.95"/>
<line x1="309.3" y1="361.6" x2="392.5" y2="361.6" stroke="#737373" stroke-width="0.95"/>
<line x1="350.7" y1="255.2" x2="350.7" y2="308.4" stroke="#737373" stroke-width="0.95"/>
<circle cx="330.7" cy="268.8" r="1.3" stroke="#555" stroke-width="0.7" fill="none"/>
<circle cx="372" cy="268.8" r="1.3" stroke="#555" stroke-width="0.7" fill="none"/>
<circle cx="330.7" cy="295.2" r="1.3" stroke="#555" stroke-width="0.7" fill="none"/>
<circle cx="372" cy="295.2" r="1.3" stroke="#555" stroke-width="0.7" fill="none"/>
<path d="M344,319.8 L361.5,319.8 M344,321.59999999999997 L361.5,321.59999999999997" stroke="#5a5a5a" stroke-width="0.7" fill="none"/>
<rect x="344" y="319.8" width="17.5" height="1.8" fill="#c8c8c8"/>
<circle cx="343" cy="320.7" r="1.5" stroke="#555" stroke-width="0.75" fill="#eee"/>
<circle cx="362.8" cy="320.7" r="1.5" stroke="#555" stroke-width="0.75" fill="#eee"/>
<path d="M344,346.3 L361.5,346.3 M344,348.09999999999997 L361.5,348.09999999999997" stroke="#5a5a5a" stroke-width="0.7" fill="none"/>
<rect x="344" y="346.3" width="17.5" height="1.8" fill="#c8c8c8"/>
<circle cx="343" cy="347.2" r="1.5" stroke="#555" stroke-width="0.75" fill="#eee"/>
<circle cx="362.8" cy="347.2" r="1.5" stroke="#555" stroke-width="0.75" fill="#eee"/>
<path d="M344,373.1 L361.5,373.1 M344,374.9 L361.5,374.9" stroke="#5a5a5a" stroke-width="0.7" fill="none"/>
<rect x="344" y="373.1" width="17.5" height="1.8" fill="#c8c8c8"/>
<circle cx="343" cy="374" r="1.5" stroke="#555" stroke-width="0.75" fill="#eee"/>
<circle cx="362.8" cy="374" r="1.5" stroke="#555" stroke-width="0.75" fill="#eee"/>
<line x1="392.5" y1="258.1" x2="578.8" y2="258.1" stroke="#737373" stroke-width="0.95"/>
<line x1="392.5" y1="261.2" x2="578.8" y2="261.2" stroke="#737373" stroke-width="0.95"/>
<rect x="576.6" y="256.5" width="1.4" height="6" stroke="#444444" stroke-width="0.6" fill="none"/>
<path d="M415.5,261.2 L413.6,301.3 L412.6,301.5 L412.8,304.2 L422.3,304.2 L422.3,301.5" stroke="#444444" stroke-width="0.75" fill="none"/>
<path d="M438.8,261.2 L441.6,301.3 L437.8,301.5 L437.8,304.2 L442.6,304.2 L442.6,301.5 L441.6,301.3" stroke="#444444" stroke-width="0.75" fill="none"/>
<path d="M416.5,258 L438.7,258 L437.8,324.5 L421.3,324.5 L422.3,281 L417.4,261.2" stroke="#444444" stroke-width="0.75" fill="none"/>
<rect x="421.3" y="324.5" width="17.4" height="4.9" stroke="#444444" stroke-width="0.7" fill="none"/>
<path d="M403.0,340.0 C403.0,345.4 403.8,349.4 403.6,353.4 C403.40000000000003,355.9 404.8,357.4 407.8,357.4 L417.0,356.79999999999995 C417.2,351.4 416.6,344.4 416.2,337.09999999999997" stroke="#4a4a4a" stroke-width="0.75" fill="none"/>
<path d="M403.0,340.0 C404.8,337.4 411.8,335.59999999999997 416.2,337.09999999999997 C413.8,339.4 407.8,340.9 403.0,340.0 Z" stroke="#4a4a4a" stroke-width="0.7" fill="none"/>
<path d="M404.8,341.0 L415.3,339.7 M409.40000000000003,340.4 L409.40000000000003,352.9" stroke="#6a6a6a" stroke-width="0.55" fill="none"/>
<path d="M403.7,352.4 C406.8,354.7 412.8,354.4 416.90000000000003,352.2" stroke="#4a4a4a" stroke-width="0.6" fill="none"/>
<path d="M403.0,368.90000000000003 C403.0,374.3 403.8,378.3 403.6,382.3 C403.40000000000003,384.8 404.8,386.3 407.8,386.3 L417.0,385.7 C417.2,380.3 416.6,373.3 416.2,366.0" stroke="#4a4a4a" stroke-width="0.75" fill="none"/>
<path d="M403.0,368.90000000000003 C404.8,366.3 411.8,364.5 416.2,366.0 C413.8,368.3 407.8,369.8 403.0,368.90000000000003 Z" stroke="#4a4a4a" stroke-width="0.7" fill="none"/>
<path d="M404.8,369.90000000000003 L415.3,368.6 M409.40000000000003,369.3 L409.40000000000003,381.8" stroke="#6a6a6a" stroke-width="0.55" fill="none"/>
<path d="M403.7,381.3 C406.8,383.6 412.8,383.3 416.90000000000003,381.1" stroke="#4a4a4a" stroke-width="0.6" fill="none"/>
<path d="M419.59999999999997,340.0 C419.59999999999997,345.4 420.4,349.4 420.2,353.4 C420.0,355.9 421.4,357.4 424.4,357.4 L433.59999999999997,356.79999999999995 C433.79999999999995,351.4 433.2,344.4 432.79999999999995,337.09999999999997" stroke="#4a4a4a" stroke-width="0.75" fill="none"/>
<path d="M419.59999999999997,340.0 C421.4,337.4 428.4,335.59999999999997 432.79999999999995,337.09999999999997 C430.4,339.4 424.4,340.9 419.59999999999997,340.0 Z" stroke="#4a4a4a" stroke-width="0.7" fill="none"/>
<path d="M421.4,341.0 L431.9,339.7 M426.0,340.4 L426.0,352.9" stroke="#6a6a6a" stroke-width="0.55" fill="none"/>
<path d="M420.29999999999995,352.4 C423.4,354.7 429.4,354.4 433.5,352.2" stroke="#4a4a4a" stroke-width="0.6" fill="none"/>
<path d="M419.59999999999997,368.90000000000003 C419.59999999999997,374.3 420.4,378.3 420.2,382.3 C420.0,384.8 421.4,386.3 424.4,386.3 L433.59999999999997,385.7 C433.79999999999995,380.3 433.2,373.3 432.79999999999995,366.0" stroke="#4a4a4a" stroke-width="0.75" fill="none"/>
<path d="M419.59999999999997,368.90000000000003 C421.4,366.3 428.4,364.5 432.79999999999995,366.0 C430.4,368.3 424.4,369.8 419.59999999999997,368.90000000000003 Z" stroke="#4a4a4a" stroke-width="0.7" fill="none"/>
<path d="M421.4,369.90000000000003 L431.9,368.6 M426.0,369.3 L426.0,381.8" stroke="#6a6a6a" stroke-width="0.55" fill="none"/>
<path d="M420.29999999999995,381.3 C423.4,383.6 429.4,383.3 433.5,381.1" stroke="#4a4a4a" stroke-width="0.6" fill="none"/>
<path d="M438.3,340.0 C438.3,345.4 439.1,349.4 438.90000000000003,353.4 C438.70000000000005,355.9 440.1,357.4 443.1,357.4 L452.3,356.79999999999995 C452.5,351.4 451.90000000000003,344.4 451.5,337.09999999999997" stroke="#4a4a4a" stroke-width="0.75" fill="none"/>
<path d="M438.3,340.0 C440.1,337.4 447.1,335.59999999999997 451.5,337.09999999999997 C449.1,339.4 443.1,340.9 438.3,340.0 Z" stroke="#4a4a4a" stroke-width="0.7" fill="none"/>
<path d="M440.1,341.0 L450.6,339.7 M444.70000000000005,340.4 L444.70000000000005,352.9" stroke="#6a6a6a" stroke-width="0.55" fill="none"/>
<path d="M439.0,352.4 C442.1,354.7 448.1,354.4 452.20000000000005,352.2" stroke="#4a4a4a" stroke-width="0.6" fill="none"/>
<path d="M438.3,368.90000000000003 C438.3,374.3 439.1,378.3 438.90000000000003,382.3 C438.70000000000005,384.8 440.1,386.3 443.1,386.3 L452.3,385.7 C452.5,380.3 451.90000000000003,373.3 451.5,366.0" stroke="#4a4a4a" stroke-width="0.75" fill="none"/>
<path d="M438.3,368.90000000000003 C440.1,366.3 447.1,364.5 451.5,366.0 C449.1,368.3 443.1,369.8 438.3,368.90000000000003 Z" stroke="#4a4a4a" stroke-width="0.7" fill="none"/>
<path d="M440.1,369.90000000000003 L450.6,368.6 M444.70000000000005,369.3 L444.70000000000005,381.8" stroke="#6a6a6a" stroke-width="0.55" fill="none"/>
<path d="M439.0,381.3 C442.1,383.6 448.1,383.3 452.20000000000005,381.1" stroke="#4a4a4a" stroke-width="0.6" fill="none"/>
<path d="M455.2,340.0 C455.2,345.4 456.0,349.4 455.8,353.4 C455.6,355.9 457.0,357.4 460.0,357.4 L469.2,356.79999999999995 C469.4,351.4 468.8,344.4 468.4,337.09999999999997" stroke="#4a4a4a" stroke-width="0.75" fill="none"/>
<path d="M455.2,340.0 C457.0,337.4 464.0,335.59999999999997 468.4,337.09999999999997 C466.0,339.4 460.0,340.9 455.2,340.0 Z" stroke="#4a4a4a" stroke-width="0.7" fill="none"/>
<path d="M457.0,341.0 L467.5,339.7 M461.6,340.4 L461.6,352.9" stroke="#6a6a6a" stroke-width="0.55" fill="none"/>
<path d="M455.9,352.4 C459.0,354.7 465.0,354.4 469.1,352.2" stroke="#4a4a4a" stroke-width="0.6" fill="none"/>
<path d="M455.2,368.90000000000003 C455.2,374.3 456.0,378.3 455.8,382.3 C455.6,384.8 457.0,386.3 460.0,386.3 L469.2,385.7 C469.4,380.3 468.8,373.3 468.4,366.0" stroke="#4a4a4a" stroke-width="0.75" fill="none"/>
<path d="M455.2,368.90000000000003 C457.0,366.3 464.0,364.5 468.4,366.0 C466.0,368.3 460.0,369.8 455.2,368.90000000000003 Z" stroke="#4a4a4a" stroke-width="0.7" fill="none"/>
<path d="M457.0,369.90000000000003 L467.5,368.6 M461.6,369.3 L461.6,381.8" stroke="#6a6a6a" stroke-width="0.55" fill="none"/>
<path d="M455.9,381.3 C459.0,383.6 465.0,383.3 469.1,381.1" stroke="#4a4a4a" stroke-width="0.6" fill="none"/>
<path d="M476.4,340.0 C476.4,345.4 477.2,349.4 477.0,353.4 C476.8,355.9 478.2,357.4 481.2,357.4 L490.4,356.79999999999995 C490.59999999999997,351.4 490.0,344.4 489.59999999999997,337.09999999999997" stroke="#4a4a4a" stroke-width="0.75" fill="none"/>
<path d="M476.4,340.0 C478.2,337.4 485.2,335.59999999999997 489.59999999999997,337.09999999999997 C487.2,339.4 481.2,340.9 476.4,340.0 Z" stroke="#4a4a4a" stroke-width="0.7" fill="none"/>
<path d="M478.2,341.0 L488.7,339.7 M482.8,340.4 L482.8,352.9" stroke="#6a6a6a" stroke-width="0.55" fill="none"/>
<path d="M477.09999999999997,352.4 C480.2,354.7 486.2,354.4 490.3,352.2" stroke="#4a4a4a" stroke-width="0.6" fill="none"/>
<path d="M476.4,368.90000000000003 C476.4,374.3 477.2,378.3 477.0,382.3 C476.8,384.8 478.2,386.3 481.2,386.3 L490.4,385.7 C490.59999999999997,380.3 490.0,373.3 489.59999999999997,366.0" stroke="#4a4a4a" stroke-width="0.75" fill="none"/>
<path d="M476.4,368.90000000000003 C478.2,366.3 485.2,364.5 489.59999999999997,366.0 C487.2,368.3 481.2,369.8 476.4,368.90000000000003 Z" stroke="#4a4a4a" stroke-width="0.7" fill="none"/>
<path d="M478.2,369.90000000000003 L488.7,368.6 M482.8,369.3 L482.8,381.8" stroke="#6a6a6a" stroke-width="0.55" fill="none"/>
<path d="M477.09999999999997,381.3 C480.2,383.6 486.2,383.3 490.3,381.1" stroke="#4a4a4a" stroke-width="0.6" fill="none"/>
<path d="M493.9,340.0 C493.9,345.4 494.7,349.4 494.5,353.4 C494.3,355.9 495.7,357.4 498.7,357.4 L507.9,356.79999999999995 C508.09999999999997,351.4 507.5,344.4 507.09999999999997,337.09999999999997" stroke="#4a4a4a" stroke-width="0.75" fill="none"/>
<path d="M493.9,340.0 C495.7,337.4 502.7,335.59999999999997 507.09999999999997,337.09999999999997 C504.7,339.4 498.7,340.9 493.9,340.0 Z" stroke="#4a4a4a" stroke-width="0.7" fill="none"/>
<path d="M495.7,341.0 L506.2,339.7 M500.3,340.4 L500.3,352.9" stroke="#6a6a6a" stroke-width="0.55" fill="none"/>
<path d="M494.59999999999997,352.4 C497.7,354.7 503.7,354.4 507.8,352.2" stroke="#4a4a4a" stroke-width="0.6" fill="none"/>
<path d="M493.9,368.90000000000003 C493.9,374.3 494.7,378.3 494.5,382.3 C494.3,384.8 495.7,386.3 498.7,386.3 L507.9,385.7 C508.09999999999997,380.3 507.5,373.3 507.09999999999997,366.0" stroke="#4a4a4a" stroke-width="0.75" fill="none"/>
<path d="M493.9,368.90000000000003 C495.7,366.3 502.7,364.5 507.09999999999997,366.0 C504.7,368.3 498.7,369.8 493.9,368.90000000000003 Z" stroke="#4a4a4a" stroke-width="0.7" fill="none"/>
<path d="M495.7,369.90000000000003 L506.2,368.6 M500.3,369.3 L500.3,381.8" stroke="#6a6a6a" stroke-width="0.55" fill="none"/>
<path d="M494.59999999999997,381.3 C497.7,383.6 503.7,383.3 507.8,381.1" stroke="#4a4a4a" stroke-width="0.6" fill="none"/>
<path d="M512.9000000000001,340.0 C512.9000000000001,345.4 513.7,349.4 513.5,353.4 C513.3000000000001,355.9 514.7,357.4 517.7,357.4 L526.9000000000001,356.79999999999995 C527.1,351.4 526.5,344.4 526.1,337.09999999999997" stroke="#4a4a4a" stroke-width="0.75" fill="none"/>
<path d="M512.9000000000001,340.0 C514.7,337.4 521.7,335.59999999999997 526.1,337.09999999999997 C523.7,339.4 517.7,340.9 512.9000000000001,340.0 Z" stroke="#4a4a4a" stroke-width="0.7" fill="none"/>
<path d="M514.7,341.0 L525.2,339.7 M519.3000000000001,340.4 L519.3000000000001,352.9" stroke="#6a6a6a" stroke-width="0.55" fill="none"/>
<path d="M513.6,352.4 C516.7,354.7 522.7,354.4 526.8000000000001,352.2" stroke="#4a4a4a" stroke-width="0.6" fill="none"/>
<path d="M512.9000000000001,368.90000000000003 C512.9000000000001,374.3 513.7,378.3 513.5,382.3 C513.3000000000001,384.8 514.7,386.3 517.7,386.3 L526.9000000000001,385.7 C527.1,380.3 526.5,373.3 526.1,366.0" stroke="#4a4a4a" stroke-width="0.75" fill="none"/>
<path d="M512.9000000000001,368.90000000000003 C514.7,366.3 521.7,364.5 526.1,366.0 C523.7,368.3 517.7,369.8 512.9000000000001,368.90000000000003 Z" stroke="#4a4a4a" stroke-width="0.7" fill="none"/>
<path d="M514.7,369.90000000000003 L525.2,368.6 M519.3000000000001,369.3 L519.3000000000001,381.8" stroke="#6a6a6a" stroke-width="0.55" fill="none"/>
<path d="M513.6,381.3 C516.7,383.6 522.7,383.3 526.8000000000001,381.1" stroke="#4a4a4a" stroke-width="0.6" fill="none"/>
<path d="M530.0,340.0 C530.0,345.4 530.8,349.4 530.5999999999999,353.4 C530.4,355.9 531.8,357.4 534.8,357.4 L544.0,356.79999999999995 C544.1999999999999,351.4 543.5999999999999,344.4 543.1999999999999,337.09999999999997" stroke="#4a4a4a" stroke-width="0.75" fill="none"/>
<path d="M530.0,340.0 C531.8,337.4 538.8,335.59999999999997 543.1999999999999,337.09999999999997 C540.8,339.4 534.8,340.9 530.0,340.0 Z" stroke="#4a4a4a" stroke-width="0.7" fill="none"/>
<path d="M531.8,341.0 L542.3,339.7 M536.4,340.4 L536.4,352.9" stroke="#6a6a6a" stroke-width="0.55" fill="none"/>
<path d="M530.6999999999999,352.4 C533.8,354.7 539.8,354.4 543.9,352.2" stroke="#4a4a4a" stroke-width="0.6" fill="none"/>
<path d="M530.0,368.90000000000003 C530.0,374.3 530.8,378.3 530.5999999999999,382.3 C530.4,384.8 531.8,386.3 534.8,386.3 L544.0,385.7 C544.1999999999999,380.3 543.5999999999999,373.3 543.1999999999999,366.0" stroke="#4a4a4a" stroke-width="0.75" fill="none"/>
<path d="M530.0,368.90000000000003 C531.8,366.3 538.8,364.5 543.1999999999999,366.0 C540.8,368.3 534.8,369.8 530.0,368.90000000000003 Z" stroke="#4a4a4a" stroke-width="0.7" fill="none"/>
<path d="M531.8,369.90000000000003 L542.3,368.6 M536.4,369.3 L536.4,381.8" stroke="#6a6a6a" stroke-width="0.55" fill="none"/>
<path d="M530.6999999999999,381.3 C533.8,383.6 539.8,383.3 543.9,381.1" stroke="#4a4a4a" stroke-width="0.6" fill="none"/>
<path d="M546.5,340.0 C546.5,345.4 547.3,349.4 547.0999999999999,353.4 C546.9,355.9 548.3,357.4 551.3,357.4 L560.5,356.79999999999995 C560.6999999999999,351.4 560.0999999999999,344.4 559.6999999999999,337.09999999999997" stroke="#4a4a4a" stroke-width="0.75" fill="none"/>
<path d="M546.5,340.0 C548.3,337.4 555.3,335.59999999999997 559.6999999999999,337.09999999999997 C557.3,339.4 551.3,340.9 546.5,340.0 Z" stroke="#4a4a4a" stroke-width="0.7" fill="none"/>
<path d="M548.3,341.0 L558.8,339.7 M552.9,340.4 L552.9,352.9" stroke="#6a6a6a" stroke-width="0.55" fill="none"/>
<path d="M547.1999999999999,352.4 C550.3,354.7 556.3,354.4 560.4,352.2" stroke="#4a4a4a" stroke-width="0.6" fill="none"/>
<path d="M546.5,368.90000000000003 C546.5,374.3 547.3,378.3 547.0999999999999,382.3 C546.9,384.8 548.3,386.3 551.3,386.3 L560.5,385.7 C560.6999999999999,380.3 560.0999999999999,373.3 559.6999999999999,366.0" stroke="#4a4a4a" stroke-width="0.75" fill="none"/>
<path d="M546.5,368.90000000000003 C548.3,366.3 555.3,364.5 559.6999999999999,366.0 C557.3,368.3 551.3,369.8 546.5,368.90000000000003 Z" stroke="#4a4a4a" stroke-width="0.7" fill="none"/>
<path d="M548.3,369.90000000000003 L558.8,368.6 M552.9,369.3 L552.9,381.8" stroke="#6a6a6a" stroke-width="0.55" fill="none"/>
<path d="M547.1999999999999,381.3 C550.3,383.6 556.3,383.3 560.4,381.1" stroke="#4a4a4a" stroke-width="0.6" fill="none"/>
<path d="M563.2,340.0 C563.2,345.4 564.0,349.4 563.8,353.4 C563.6,355.9 565.0,357.4 568.0,357.4 L577.2,356.79999999999995 C577.4,351.4 576.8,344.4 576.4,337.09999999999997" stroke="#4a4a4a" stroke-width="0.75" fill="none"/>
<path d="M563.2,340.0 C565.0,337.4 572.0,335.59999999999997 576.4,337.09999999999997 C574.0,339.4 568.0,340.9 563.2,340.0 Z" stroke="#4a4a4a" stroke-width="0.7" fill="none"/>
<path d="M565.0,341.0 L575.5,339.7 M569.6,340.4 L569.6,352.9" stroke="#6a6a6a" stroke-width="0.55" fill="none"/>
<path d="M563.9,352.4 C567.0,354.7 573.0,354.4 577.1,352.2" stroke="#4a4a4a" stroke-width="0.6" fill="none"/>
<path d="M563.2,368.90000000000003 C563.2,374.3 564.0,378.3 563.8,382.3 C563.6,384.8 565.0,386.3 568.0,386.3 L577.2,385.7 C577.4,380.3 576.8,373.3 576.4,366.0" stroke="#4a4a4a" stroke-width="0.75" fill="none"/>
<path d="M563.2,368.90000000000003 C565.0,366.3 572.0,364.5 576.4,366.0 C574.0,368.3 568.0,369.8 563.2,368.90000000000003 Z" stroke="#4a4a4a" stroke-width="0.7" fill="none"/>
<path d="M565.0,369.90000000000003 L575.5,368.6 M569.6,369.3 L569.6,381.8" stroke="#6a6a6a" stroke-width="0.55" fill="none"/>
<path d="M563.9,381.3 C567.0,383.6 573.0,383.3 577.1,381.1" stroke="#4a4a4a" stroke-width="0.6" fill="none"/>
<line x1="392.5" y1="359" x2="578.8" y2="359" stroke="#737373" stroke-width="0.95"/>
<line x1="392.5" y1="361.8" x2="578.8" y2="361.8" stroke="#737373" stroke-width="0.95"/>
<line x1="474.4" y1="361.8" x2="474.4" y2="387.3" stroke="#737373" stroke-width="0.95"/>
<g>
<defs><linearGradient id="bl" x1="0" y1="0" x2="1" y2="1"><stop offset="0" stop-color="#1b3f73"/><stop offset="1" stop-color="#24558f"/></linearGradient>
<linearGradient id="yl" x1="0" y1="0" x2="1" y2="0"><stop offset="0" stop-color="#f6eeb0"/><stop offset="0.5" stop-color="#f3d63a"/><stop offset="1" stop-color="#e9c21c"/></linearGradient></defs>
<path d="M10.4,290.8 L61,290.8 C64,290.8 66,292.5 68,295.5 L92.4,319 L92.4,398.5 L10.4,398.5 Z" fill="url(#yl)"/>
<path d="M10.4,290.8 L61,290.8 C64,290.8 66,292.5 68,295.5 L92.4,319 L92.4,366 L10.4,348 Z" fill="url(#bl)"/>
<path d="M70,313.5 C78,313.8 86,315.5 92.4,319 L92.4,323 C86,319.5 78,317 70,315.5 Z" fill="#0e2748" opacity="0.8"/>
<path d="M68,295.5 L70,313.5 C78,313.8 86,315.5 91.8,318.4 Z" fill="#4a72a6"/>
<path d="M68,295.5 L69,305 L80,307 Z" fill="#5a82b4" opacity="0.6"/>
<line x1="34.3" y1="290.4" x2="34.3" y2="353" stroke="#fff" stroke-width="1.3"/>
<line x1="10.4" y1="326" x2="92.4" y2="326" stroke="#fff" stroke-width="1.3"/>
<rect x="24" y="315.8" width="20.8" height="20.4" fill="#24508a" stroke="#fff" stroke-width="1.3"/>
<rect x="33.6" y="325.3" width="1.6" height="1.6" fill="#fff"/>
<text x="32.3" y="393.8" font-family="Liberation Sans" font-weight="bold" font-size="27.5" fill="#0a0a0a" stroke="#0a0a0a" stroke-width="0.9" textLength="57.5" lengthAdjust="spacingAndGlyphs">.dwg</text>
</g>
<g stroke="#2a2a2a" stroke-width="0.5" stroke-linejoin="round">
<path d="M709,141.8 C710,139 713,137.5 716.5,137.5 L719.5,139.5 L718,142 L710,142.5 Z" fill="#2a7cc8"/>
<path d="M737.5,136 L741.5,135.5 C743,138 744,141 743.5,143 L739.5,142.5 Z" fill="#2a7cc8"/>
<path d="M716,138 C717,134 719.5,130 722,128 L738,128 C740,131 741.5,133 742,136 L737.5,137 C736,134.5 733,133 729.5,132.5 C726,134 722,137 720,139.5 Z" fill="#2f86d6"/>
<path d="M721,109 C716,111 713,115 711,118.5 L713.5,121 C716,118 719,116.5 721.5,115.5 L722,128.5 L738.5,128.5 L738,115 C741,113 744,110 745,107 L742.5,105 C740,107 737,108 734,108 Z" fill="#2f86d6"/>
<path d="M729.5,109.5 L730,128" stroke="#1d5f9e" stroke-width="0.6" fill="none"/>
<path d="M715,96.5 C714.5,90 719,86.5 729,86.5 C739,86.5 744,90 743.5,96.5 C743,104 738,108.5 729.5,108.5 C721,108.5 715.5,104 715,96.5 Z" fill="#f4c8a0"/>
<path d="M715,93 L715.5,100 L718,93 Z M743.5,93 L743,100 L741,93 Z" fill="#e89a40" stroke="none"/>
<path d="M715.5,88 C715,82 717,77 721,75 L723,76.5 L725,73.5 L728,75.5 L731,72.8 L733,75.5 L737,74 L738,77 L742,77.5 L741.5,80.5 C744,83 744.5,86 744,88 Z" fill="#f2bd1a"/>
<path d="M720,84 C722,80 725,78 728,77.5 M726,84 C728,80 732,78 735,78.5 M732,85 C735,82 738,81 741,82" stroke="#d99a10" stroke-width="0.6" fill="none"/>
<path d="M714.4,87 L744.2,86.4 L744.2,93 L714.4,93.4 Z" fill="#3a3d42"/>
<path d="M744,89 C747,87 750,86.5 753,87.5 C751,90 752,93 751,96 C748,94 746,92 744,92 Z" fill="#3a3d42"/>
<path d="M719,95.8 C720.5,94.8 722.5,94.8 723.5,95.8 C722.5,97.3 720,97.3 719,95.8 Z" fill="#fff" stroke-width="0.4"/>
<path d="M732,95.8 C733.5,94.8 735.5,94.8 736.5,95.8 C735.5,97.3 733,97.3 732,95.8 Z" fill="#fff" stroke-width="0.4"/>
<path d="M725,103 C727,104.5 730,104.5 732,103" stroke="#8a4a30" stroke-width="0.6" fill="none"/>
<path d="M697.5,125.4 L758,101.2" stroke="#7a4a25" stroke-width="2.1" stroke-linecap="round"/>
<path d="M697.5,125.4 L758,101.2" stroke="#a06a3a" stroke-width="1" stroke-linecap="round"/>
<path d="M753.5,91.8 C756,89 759,90 760,93 C762,97 765,100 765,104 C765,108 764,110 763,109.5 C761,106 759,104 756,103 C754,101 754,98 755,96 Z" fill="#f0c020"/>
<circle cx="712" cy="120" r="1.9" fill="#f4c8a0"/><circle cx="744" cy="106.5" r="1.9" fill="#f4c8a0"/>
</g>
<g stroke="#2d8cd3" stroke-width="1.85" fill="none" stroke-linecap="round" stroke-linejoin="round">
<path d="M680.7,154.7 L682,142 C686,141 691,142 692.5,144.5 C693.5,147.5 689,150.5 684,150.7"/>
<path d="M692.7,154.5 L693.3,160"/><circle cx="692" cy="151.5" r="0.6" fill="#2f8fd5"/>
<path d="M700.7,154 C698,153 695,154 695.5,155.8 C696,157 700,157.5 700,159 C699.5,160.5 697,160.5 696,160"/>
<path d="M704.7,148.7 L706,160.7"/>
<path d="M708.7,156.5 L709.3,160.7"/><circle cx="708.2" cy="153.5" r="0.6" fill="#2f8fd5"/>
<path d="M712.7,149.3 L714,162 M720,153.5 L714.7,157.3 L722,162"/>
<path d="M726.7,161.3 L727.3,150.7 L733.3,157.3 L736,150 L738,162"/>
<path d="M740.7,156.7 L741.3,161.3"/><circle cx="740.4" cy="153.7" r="0.6" fill="#2f8fd5"/>
<path d="M742.3,160.7 L742.8,156.5 C744,154.8 747,154.8 747.8,156.8 L748.2,160.3 M747.8,156.8 C749,154.5 752.5,154.5 753.3,156.8 L754.5,159.5"/>
<path d="M762.7,152 C760,151.8 757,153 757.3,156 C757.8,158.5 761,157.5 763.5,153.5 C763.5,155 764.5,156.5 766.7,156.7"/>
<path d="M769.3,155.3 L770,150.7 C771,149 773,148.5 777.3,146.7"/>
</g>
<line x1="19.2" y1="405" x2="19.2" y2="409.5" stroke="#555" stroke-width="0.7"/>
</svg>
</body></html>
